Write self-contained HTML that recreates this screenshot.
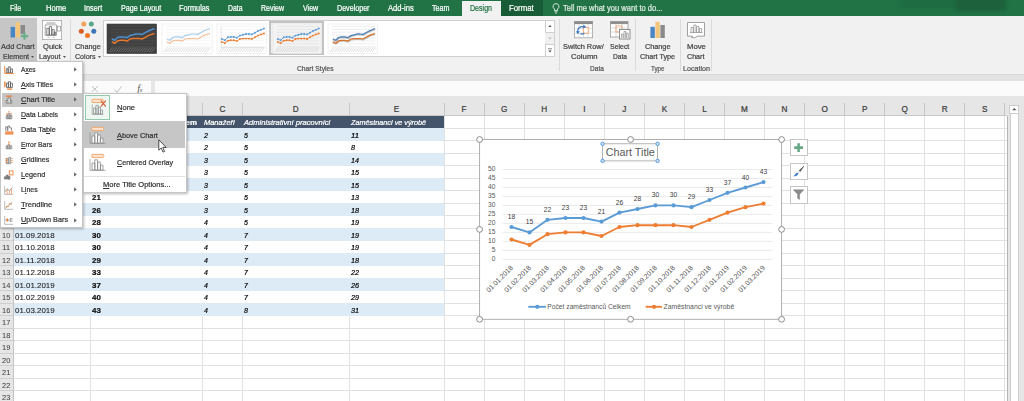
<!DOCTYPE html>
<html lang="cs"><head><meta charset="utf-8"><title>Excel - Chart Title</title>
<style>
html,body{margin:0;padding:0;}
body{width:1024px;height:401px;overflow:hidden;position:relative;background:#fff;font-family:"Liberation Sans",sans-serif;}
div{position:absolute;box-sizing:border-box;}
svg{position:absolute;overflow:visible;}
.t{white-space:nowrap;-webkit-text-stroke:0.22px currentColor;}
u{text-decoration-thickness:0.6px;text-underline-offset:1px;}
</style></head><body>

<div style="left:0.00px;top:0.00px;width:1024.00px;height:15.80px;background:#217346;"></div>
<div style="left:500.50px;top:0.00px;width:42.20px;height:15.80px;background:#185c37;"></div>
<div style="left:461.50px;top:1.30px;width:39.00px;height:14.60px;background:#f1f1f1;"></div>
<div style="left:900px;top:-2px;width:56px;height:10px;background:#1e6a41;filter:blur(2px);opacity:.8"></div>
<div style="left:955px;top:-3px;width:51px;height:14px;background:#1c5f3b;filter:blur(2px);opacity:.9"></div>
<div class="t" style="top:3px;font-size:8.3px;line-height:10px;color:#fff;left:10.00px;transform-origin:0 50%;transform:scaleX(0.8411);">File</div>
<div class="t" style="top:3px;font-size:8.3px;line-height:10px;color:#fff;left:45.50px;transform-origin:0 50%;transform:scaleX(0.9078);">Home</div>
<div class="t" style="top:3px;font-size:8.3px;line-height:10px;color:#fff;left:83.75px;transform-origin:0 50%;transform:scaleX(0.8792);">Insert</div>
<div class="t" style="top:3px;font-size:8.3px;line-height:10px;color:#fff;left:120.50px;transform-origin:0 50%;transform:scaleX(0.8624);">Page Layout</div>
<div class="t" style="top:3px;font-size:8.3px;line-height:10px;color:#fff;left:179.00px;transform-origin:0 50%;transform:scaleX(0.8817);">Formulas</div>
<div class="t" style="top:3px;font-size:8.3px;line-height:10px;color:#fff;left:228.00px;transform-origin:0 50%;transform:scaleX(0.8270);">Data</div>
<div class="t" style="top:3px;font-size:8.3px;line-height:10px;color:#fff;left:261.00px;transform-origin:0 50%;transform:scaleX(0.8451);">Review</div>
<div class="t" style="top:3px;font-size:8.3px;line-height:10px;color:#fff;left:302.50px;transform-origin:0 50%;transform:scaleX(0.8548);">View</div>
<div class="t" style="top:3px;font-size:8.3px;line-height:10px;color:#fff;left:336.50px;transform-origin:0 50%;transform:scaleX(0.8590);">Developer</div>
<div class="t" style="top:3px;font-size:8.3px;line-height:10px;color:#fff;left:387.75px;transform-origin:0 50%;transform:scaleX(0.9150);">Add-ins</div>
<div class="t" style="top:3px;font-size:8.3px;line-height:10px;color:#fff;left:432.25px;transform-origin:0 50%;transform:scaleX(0.8622);">Team</div>
<div class="t" style="top:3px;font-size:8.3px;line-height:10px;color:#217346;left:469.75px;transform-origin:0 50%;transform:scaleX(0.8515);">Design</div>
<div class="t" style="top:3px;font-size:8.3px;line-height:10px;color:#fff;left:509.00px;transform-origin:0 50%;transform:scaleX(0.9415);">Format</div>
<div class="t" style="top:3px;font-size:8.3px;line-height:10px;color:#dcebe2;left:563.25px;transform-origin:0 50%;transform:scaleX(0.9100);">Tell me what you want to do...</div>
<svg style="left:551px;top:3px" width="10" height="11" viewBox="0 0 10 11"><path d="M5 0.6a2.9 2.9 0 0 1 1.5 5.4v1.6h-3v-1.6a2.9 2.9 0 0 1 1.5-5.4z" fill="none" stroke="#fff" stroke-width="0.8"/><path d="M3.6 8.8h2.8M4 10h2" stroke="#fff" stroke-width="0.7"/></svg>
<div style="left:0.00px;top:15.80px;width:1024.00px;height:58.40px;background:#f1f1f1;"></div>
<div style="left:0.00px;top:74.20px;width:1024.00px;height:7.20px;background:#e3e3e3;"></div>
<div style="left:0.00px;top:73.80px;width:1024.00px;height:0.80px;background:#d8d8d8;"></div>
<div style="left:0.00px;top:81.30px;width:1024.00px;height:14.90px;background:#e6e6e6;"></div>
<div style="left:84.00px;top:81.30px;width:67.30px;height:14.80px;background:#fbfbfb;"></div>
<div style="left:154.80px;top:81.30px;width:870.00px;height:14.80px;background:#fbfbfb;"></div>
<svg style="left:91px;top:85px" width="60" height="9" viewBox="0 0 60 9"><path d="M1 1.4l5.6 5.4M6.6 1.4l-5.6 5.4" stroke="#b2b2b2" stroke-width="0.85" fill="none"/><path d="M23.6 4.800l2.400 2.600l4.600-6" stroke="#b2b2b2" stroke-width="0.85" fill="none"/></svg>
<div class="t" style="left:137.2px;top:82.6px;font-size:9.8px;line-height:11px;color:#555;-webkit-text-stroke:0;font-family:'Liberation Serif',serif;font-style:italic">f<span style="font-size:5.2px;font-style:italic;font-family:'Liberation Sans',sans-serif;margin-left:-0.3px">x</span></div>
<div style="left:0.00px;top:17.60px;width:36.80px;height:44.00px;background:#c6c6c6;"></div>
<svg style="left:9px;top:20px" width="22" height="22" viewBox="0 0 22 22">
<rect x="1.6" y="6.9" width="4.4" height="10.6" fill="#4a86c5"/><rect x="6.6" y="2.2" width="4.4" height="15.3" fill="#f4c67c"/><rect x="11.6" y="5" width="4.4" height="9" fill="#8a8a8a"/>
<path d="M11.9 15.1h2.5v-2.5h2.2v2.5h2.5v2.2h-2.5v2.5h-2.2v-2.5h-2.5z" fill="#6aae8c"/></svg>
<div class="t" style="top:42px;font-size:7.5px;line-height:9px;color:#444;left:1.30px;transform-origin:0 50%;transform:scaleX(0.9950);">Add Chart</div>
<div class="t" style="top:52px;font-size:7.5px;line-height:9px;color:#444;left:2.90px;transform-origin:0 50%;transform:scaleX(0.9486);">Element</div>
<svg style="left:31.30px;top:55.60px" width="3" height="2" viewBox="0 0 3 2"><path d="M0 0h3l-1.5 1.9z" fill="#555"/></svg>
<svg style="left:42.200px;top:20px" width="20" height="20" viewBox="0 0 20 20"><rect x="0.400" y="0.400" width="19.200" height="19.200" fill="#fff" stroke="#a8a8a8" stroke-width="0.8"/>
<path d="M4.300 3h9.200" stroke="#a4a4a4" stroke-width="1.100"/><rect x="3.200" y="4.900" width="11.400" height="10.400" fill="none" stroke="#8f8f8f" stroke-width="0.7"/>
<path d="M2 7.500h1.200M2 10h1.200M2 12.500h1.200" stroke="#bdbdbd" stroke-width="0.5"/>
<path d="M4.800 15v-6.700h2.200v6.700zM7.400 15v-8.400h2.200v8.400zM10 15v-5.400h2.200v5.400zM12.200 15v-3h1.500v3z" fill="#fff" stroke="#555" stroke-width="0.75"/>
<rect x="15.600" y="6.200" width="2.800" height="4.800" fill="#fff" stroke="#8a8a8a" stroke-width="0.65"/><path d="M5.500 17.400h2.500M10.500 17.400h2.500" stroke="#b0b0b0" stroke-width="0.7"/></svg>
<div class="t" style="top:42px;font-size:7.5px;line-height:9px;color:#444;left:42.75px;transform-origin:0 50%;transform:scaleX(1.0093);">Quick</div>
<div class="t" style="top:52px;font-size:7.5px;line-height:9px;color:#444;left:38.70px;transform-origin:0 50%;transform:scaleX(0.9548);">Layout</div>
<svg style="left:62.70px;top:55.60px" width="3" height="2" viewBox="0 0 3 2"><path d="M0 0h3l-1.5 1.9z" fill="#555"/></svg>
<div style="left:70.10px;top:19.00px;width:0.80px;height:52.00px;background:#dadada;"></div>
<svg style="left:76px;top:20px" width="24" height="20" viewBox="0 0 24 20"><circle cx="7.8" cy="4.1" r="2.5" fill="#f4a25a"/><circle cx="15.3" cy="4.1" r="2.5" fill="#5aa88a"/><circle cx="17.8" cy="11.2" r="2.5" fill="#3f76b8"/><circle cx="11.5" cy="15.4" r="2.5" fill="#ee7623"/><circle cx="5.3" cy="11.2" r="2.5" fill="#dc5f24"/></svg>
<div class="t" style="top:42px;font-size:7.5px;line-height:9px;color:#444;left:75.20px;transform-origin:0 50%;transform:scaleX(0.9820);">Change</div>
<div class="t" style="top:52px;font-size:7.5px;line-height:9px;color:#444;left:74.90px;transform-origin:0 50%;transform:scaleX(0.9459);">Colors</div>
<svg style="left:97.80px;top:55.60px" width="3" height="2" viewBox="0 0 3 2"><path d="M0 0h3l-1.5 1.9z" fill="#555"/></svg>
<div style="left:103.20px;top:19.80px;width:452.00px;height:37.60px;background:#fff;border:0.8px solid #cfcfcf;"></div>
<div style="left:544.60px;top:19.80px;width:10.60px;height:37.60px;background:#fff;border:0.8px solid #cfcfcf;"></div>
<div style="left:545.40px;top:32.40px;width:9.00px;height:12.40px;background:#f0f0f0;border-top:0.8px solid #cfcfcf;border-bottom:0.8px solid #cfcfcf;"></div>
<svg style="left:545px;top:20px" width="10" height="37" viewBox="0 0 10 37"><path d="M3.3 7l1.7-2l1.7 2z" fill="#555"/><path d="M3.3 17.6l1.7 2l1.7-2z" fill="#bbb"/><path d="M3 28.8h4" stroke="#555" stroke-width="0.7"/><path d="M3.3 30.4l1.7 2l1.7-2z" fill="#555"/></svg>
<svg style="left:106.6px;top:23.9px" width="49.6" height="29.6" viewBox="0 0 49.6 29.6"><rect x="0" y="0" width="49.6" height="29.6" fill="#404040" stroke="#404040" stroke-width="0.6"/><path d="M4 2.4H47.6" stroke="#5a5a5a" stroke-width="0.45"/><path d="M4 5.3H47.6" stroke="#5a5a5a" stroke-width="0.45"/><path d="M4 8.2H47.6" stroke="#5a5a5a" stroke-width="0.45"/><path d="M4 11.1H47.6" stroke="#5a5a5a" stroke-width="0.45"/><path d="M4 14.0H47.6" stroke="#5a5a5a" stroke-width="0.45"/><path d="M4 16.9H47.6" stroke="#5a5a5a" stroke-width="0.45"/><path d="M4 19.8H47.6" stroke="#5a5a5a" stroke-width="0.45"/><path d="M4 22.7H47.6" stroke="#5a5a5a" stroke-width="0.45"/><polyline points="4.8,15.0 7.8,16.3 10.9,13.3 13.9,12.9 17.0,12.9 20.0,13.7 23.1,11.6 26.1,10.8 29.1,10.0 32.2,10.0 35.2,10.4 38.3,8.7 41.3,7.0 44.4,5.8 47.4,4.5" fill="none" stroke="#4f8fd0" stroke-width="1.5" stroke-linejoin="round"/><polyline points="4.8,17.9 7.8,19.2 10.9,16.7 13.9,16.3 17.0,16.3 20.0,17.1 23.1,15.0 26.1,14.6 29.1,14.6 32.2,14.6 35.2,15.0 38.3,13.3 41.3,11.6 44.4,10.4 47.4,9.5" fill="none" stroke="#e8782c" stroke-width="1.5" stroke-linejoin="round"/><path d="M1.8 28.0L5.4 23.4" stroke="#8c8c8c" stroke-width="0.55"/><path d="M4.2 28.0L7.8 23.4" stroke="#8c8c8c" stroke-width="0.55"/><path d="M6.5 28.0L10.1 23.4" stroke="#8c8c8c" stroke-width="0.55"/><path d="M8.9 28.0L12.5 23.4" stroke="#8c8c8c" stroke-width="0.55"/><path d="M11.3 28.0L14.9 23.4" stroke="#8c8c8c" stroke-width="0.55"/><path d="M13.6 28.0L17.2 23.4" stroke="#8c8c8c" stroke-width="0.55"/><path d="M16.0 28.0L19.6 23.4" stroke="#8c8c8c" stroke-width="0.55"/><path d="M18.4 28.0L22.0 23.4" stroke="#8c8c8c" stroke-width="0.55"/><path d="M20.7 28.0L24.3 23.4" stroke="#8c8c8c" stroke-width="0.55"/><path d="M23.1 28.0L26.7 23.4" stroke="#8c8c8c" stroke-width="0.55"/><path d="M25.5 28.0L29.1 23.4" stroke="#8c8c8c" stroke-width="0.55"/><path d="M27.8 28.0L31.4 23.4" stroke="#8c8c8c" stroke-width="0.55"/><path d="M30.2 28.0L33.8 23.4" stroke="#8c8c8c" stroke-width="0.55"/><path d="M32.6 28.0L36.2 23.4" stroke="#8c8c8c" stroke-width="0.55"/><path d="M34.9 28.0L38.5 23.4" stroke="#8c8c8c" stroke-width="0.55"/><path d="M37.3 28.0L40.9 23.4" stroke="#8c8c8c" stroke-width="0.55"/><path d="M39.7 28.0L43.3 23.4" stroke="#8c8c8c" stroke-width="0.55"/><path d="M42.0 28.0L45.6 23.4" stroke="#8c8c8c" stroke-width="0.55"/><path d="M44.4 28.0L48.0 23.4" stroke="#8c8c8c" stroke-width="0.55"/></svg>
<svg style="left:161.6px;top:23.9px" width="50.1" height="29.6" viewBox="0 0 50.1 29.6"><rect x="0" y="0" width="50.1" height="29.6" fill="#fff" stroke="#e6e6e6" stroke-width="0.6"/><path d="M4 2.4H48.1" stroke="#e9e9e9" stroke-width="0.45"/><path d="M4 5.3H48.1" stroke="#e9e9e9" stroke-width="0.45"/><path d="M4 8.2H48.1" stroke="#e9e9e9" stroke-width="0.45"/><path d="M4 11.1H48.1" stroke="#e9e9e9" stroke-width="0.45"/><path d="M4 14.0H48.1" stroke="#e9e9e9" stroke-width="0.45"/><path d="M4 16.9H48.1" stroke="#e9e9e9" stroke-width="0.45"/><path d="M4 19.8H48.1" stroke="#e9e9e9" stroke-width="0.45"/><path d="M4 22.7H48.1" stroke="#e9e9e9" stroke-width="0.45"/><polyline points="4.8,15.0 7.9,16.3 11.0,13.3 14.0,12.9 17.1,12.9 20.2,13.7 23.3,11.6 26.4,10.8 29.4,10.0 32.5,10.0 35.6,10.4 38.7,8.7 41.7,7.0 44.8,5.8 47.9,4.5" fill="none" stroke="#a9cdec" stroke-width="1.2" stroke-linejoin="round"/><polyline points="4.8,17.9 7.9,19.2 11.0,16.7 14.0,16.3 17.1,16.3 20.2,17.1 23.3,15.0 26.4,14.6 29.4,14.6 32.5,14.6 35.6,15.0 38.7,13.3 41.7,11.6 44.8,10.4 47.9,9.5" fill="none" stroke="#f5c09c" stroke-width="1.2" stroke-linejoin="round"/><path d="M1.8 28.0L5.4 23.4" stroke="#c2c2c2" stroke-width="0.55"/><path d="M4.2 28.0L7.8 23.4" stroke="#c2c2c2" stroke-width="0.55"/><path d="M6.6 28.0L10.2 23.4" stroke="#c2c2c2" stroke-width="0.55"/><path d="M9.0 28.0L12.6 23.4" stroke="#c2c2c2" stroke-width="0.55"/><path d="M11.4 28.0L15.0 23.4" stroke="#c2c2c2" stroke-width="0.55"/><path d="M13.8 28.0L17.4 23.4" stroke="#c2c2c2" stroke-width="0.55"/><path d="M16.2 28.0L19.8 23.4" stroke="#c2c2c2" stroke-width="0.55"/><path d="M18.6 28.0L22.2 23.4" stroke="#c2c2c2" stroke-width="0.55"/><path d="M21.0 28.0L24.6 23.4" stroke="#c2c2c2" stroke-width="0.55"/><path d="M23.4 28.0L27.0 23.4" stroke="#c2c2c2" stroke-width="0.55"/><path d="M25.7 28.0L29.3 23.4" stroke="#c2c2c2" stroke-width="0.55"/><path d="M28.1 28.0L31.7 23.4" stroke="#c2c2c2" stroke-width="0.55"/><path d="M30.5 28.0L34.1 23.4" stroke="#c2c2c2" stroke-width="0.55"/><path d="M32.9 28.0L36.5 23.4" stroke="#c2c2c2" stroke-width="0.55"/><path d="M35.3 28.0L38.9 23.4" stroke="#c2c2c2" stroke-width="0.55"/><path d="M37.7 28.0L41.3 23.4" stroke="#c2c2c2" stroke-width="0.55"/><path d="M40.1 28.0L43.7 23.4" stroke="#c2c2c2" stroke-width="0.55"/><path d="M42.5 28.0L46.1 23.4" stroke="#c2c2c2" stroke-width="0.55"/><path d="M44.9 28.0L48.5 23.4" stroke="#c2c2c2" stroke-width="0.55"/></svg>
<svg style="left:216.5px;top:23.9px" width="49.2" height="29.6" viewBox="0 0 49.2 29.6"><rect x="0" y="0" width="49.2" height="29.6" fill="#fff" stroke="#e6e6e6" stroke-width="0.6"/><path d="M4 2.4H47.2" stroke="#e6e6e6" stroke-width="0.45"/><path d="M4 5.3H47.2" stroke="#e6e6e6" stroke-width="0.45"/><path d="M4 8.2H47.2" stroke="#e6e6e6" stroke-width="0.45"/><path d="M4 11.1H47.2" stroke="#e6e6e6" stroke-width="0.45"/><path d="M4 14.0H47.2" stroke="#e6e6e6" stroke-width="0.45"/><path d="M4 16.9H47.2" stroke="#e6e6e6" stroke-width="0.45"/><path d="M4 19.8H47.2" stroke="#e6e6e6" stroke-width="0.45"/><path d="M4 22.7H47.2" stroke="#e6e6e6" stroke-width="0.45"/><path d="M4 2v21.4H47.2" fill="none" stroke="#cfcfcf" stroke-width="0.5"/><polyline points="4.8,15.0 7.8,16.3 10.8,13.3 13.8,12.9 16.9,12.9 19.9,13.7 22.9,11.6 25.9,10.8 28.9,10.0 31.9,10.0 34.9,10.4 38.0,8.7 41.0,7.0 44.0,5.8 47.0,4.5" fill="none" stroke="#5b9bd5" stroke-width="0.9" stroke-linejoin="round"/><polyline points="4.8,17.9 7.8,19.2 10.8,16.7 13.8,16.3 16.9,16.3 19.9,17.1 22.9,15.0 25.9,14.6 28.9,14.6 31.9,14.6 34.9,15.0 38.0,13.3 41.0,11.6 44.0,10.4 47.0,9.5" fill="none" stroke="#ed7d31" stroke-width="0.9" stroke-linejoin="round"/><circle cx="4.8" cy="15.0" r="0.95" fill="#5b9bd5"/><circle cx="7.8" cy="16.3" r="0.95" fill="#5b9bd5"/><circle cx="10.8" cy="13.3" r="0.95" fill="#5b9bd5"/><circle cx="13.8" cy="12.9" r="0.95" fill="#5b9bd5"/><circle cx="16.9" cy="12.9" r="0.95" fill="#5b9bd5"/><circle cx="19.9" cy="13.7" r="0.95" fill="#5b9bd5"/><circle cx="22.9" cy="11.6" r="0.95" fill="#5b9bd5"/><circle cx="25.9" cy="10.8" r="0.95" fill="#5b9bd5"/><circle cx="28.9" cy="10.0" r="0.95" fill="#5b9bd5"/><circle cx="31.9" cy="10.0" r="0.95" fill="#5b9bd5"/><circle cx="34.9" cy="10.4" r="0.95" fill="#5b9bd5"/><circle cx="38.0" cy="8.7" r="0.95" fill="#5b9bd5"/><circle cx="41.0" cy="7.0" r="0.95" fill="#5b9bd5"/><circle cx="44.0" cy="5.8" r="0.95" fill="#5b9bd5"/><circle cx="47.0" cy="4.5" r="0.95" fill="#5b9bd5"/><circle cx="4.8" cy="17.9" r="0.95" fill="#ed7d31"/><circle cx="7.8" cy="19.2" r="0.95" fill="#ed7d31"/><circle cx="10.8" cy="16.7" r="0.95" fill="#ed7d31"/><circle cx="13.8" cy="16.3" r="0.95" fill="#ed7d31"/><circle cx="16.9" cy="16.3" r="0.95" fill="#ed7d31"/><circle cx="19.9" cy="17.1" r="0.95" fill="#ed7d31"/><circle cx="22.9" cy="15.0" r="0.95" fill="#ed7d31"/><circle cx="25.9" cy="14.6" r="0.95" fill="#ed7d31"/><circle cx="28.9" cy="14.6" r="0.95" fill="#ed7d31"/><circle cx="31.9" cy="14.6" r="0.95" fill="#ed7d31"/><circle cx="34.9" cy="15.0" r="0.95" fill="#ed7d31"/><circle cx="38.0" cy="13.3" r="0.95" fill="#ed7d31"/><circle cx="41.0" cy="11.6" r="0.95" fill="#ed7d31"/><circle cx="44.0" cy="10.4" r="0.95" fill="#ed7d31"/><circle cx="47.0" cy="9.5" r="0.95" fill="#ed7d31"/><path d="M1.8 28.0L5.4 23.4" stroke="#c2c2c2" stroke-width="0.55"/><path d="M4.1 28.0L7.7 23.4" stroke="#c2c2c2" stroke-width="0.55"/><path d="M6.5 28.0L10.1 23.4" stroke="#c2c2c2" stroke-width="0.55"/><path d="M8.8 28.0L12.4 23.4" stroke="#c2c2c2" stroke-width="0.55"/><path d="M11.2 28.0L14.8 23.4" stroke="#c2c2c2" stroke-width="0.55"/><path d="M13.5 28.0L17.1 23.4" stroke="#c2c2c2" stroke-width="0.55"/><path d="M15.9 28.0L19.5 23.4" stroke="#c2c2c2" stroke-width="0.55"/><path d="M18.2 28.0L21.8 23.4" stroke="#c2c2c2" stroke-width="0.55"/><path d="M20.6 28.0L24.2 23.4" stroke="#c2c2c2" stroke-width="0.55"/><path d="M22.9 28.0L26.5 23.4" stroke="#c2c2c2" stroke-width="0.55"/><path d="M25.2 28.0L28.8 23.4" stroke="#c2c2c2" stroke-width="0.55"/><path d="M27.6 28.0L31.2 23.4" stroke="#c2c2c2" stroke-width="0.55"/><path d="M29.9 28.0L33.5 23.4" stroke="#c2c2c2" stroke-width="0.55"/><path d="M32.3 28.0L35.9 23.4" stroke="#c2c2c2" stroke-width="0.55"/><path d="M34.6 28.0L38.2 23.4" stroke="#c2c2c2" stroke-width="0.55"/><path d="M37.0 28.0L40.6 23.4" stroke="#c2c2c2" stroke-width="0.55"/><path d="M39.3 28.0L42.9 23.4" stroke="#c2c2c2" stroke-width="0.55"/><path d="M41.7 28.0L45.3 23.4" stroke="#c2c2c2" stroke-width="0.55"/><path d="M44.0 28.0L47.6 23.4" stroke="#c2c2c2" stroke-width="0.55"/></svg>
<div style="left:269.20px;top:21.30px;width:55.00px;height:34.20px;background:#efefef;border:2.5px solid #c3c3c3;"></div>
<svg style="left:272.7px;top:23.9px" width="48.0" height="29.6" viewBox="0 0 48.0 29.6"><rect x="0" y="0" width="48.0" height="29.6" fill="#f4f4f4" stroke="#e6e6e6" stroke-width="0.6"/><path d="M4 2.4H46.0" stroke="#d2d2d2" stroke-width="0.45"/><path d="M4 5.3H46.0" stroke="#d2d2d2" stroke-width="0.45"/><path d="M4 8.2H46.0" stroke="#d2d2d2" stroke-width="0.45"/><path d="M4 11.1H46.0" stroke="#d2d2d2" stroke-width="0.45"/><path d="M4 14.0H46.0" stroke="#d2d2d2" stroke-width="0.45"/><path d="M4 16.9H46.0" stroke="#d2d2d2" stroke-width="0.45"/><path d="M4 19.8H46.0" stroke="#d2d2d2" stroke-width="0.45"/><path d="M4 22.7H46.0" stroke="#d2d2d2" stroke-width="0.45"/><polyline points="4.8,15.0 7.7,16.3 10.7,13.3 13.6,12.9 16.5,12.9 19.4,13.7 22.4,11.6 25.3,10.8 28.2,10.0 31.2,10.0 34.1,10.4 37.0,8.7 39.9,7.0 42.9,5.8 45.8,4.5" fill="none" stroke="#5b9bd5" stroke-width="0.9" stroke-linejoin="round"/><polyline points="4.8,17.9 7.7,19.2 10.7,16.7 13.6,16.3 16.5,16.3 19.4,17.1 22.4,15.0 25.3,14.6 28.2,14.6 31.2,14.6 34.1,15.0 37.0,13.3 39.9,11.6 42.9,10.4 45.8,9.5" fill="none" stroke="#ed7d31" stroke-width="0.9" stroke-linejoin="round"/><circle cx="4.8" cy="15.0" r="0.95" fill="#5b9bd5"/><circle cx="7.7" cy="16.3" r="0.95" fill="#5b9bd5"/><circle cx="10.7" cy="13.3" r="0.95" fill="#5b9bd5"/><circle cx="13.6" cy="12.9" r="0.95" fill="#5b9bd5"/><circle cx="16.5" cy="12.9" r="0.95" fill="#5b9bd5"/><circle cx="19.4" cy="13.7" r="0.95" fill="#5b9bd5"/><circle cx="22.4" cy="11.6" r="0.95" fill="#5b9bd5"/><circle cx="25.3" cy="10.8" r="0.95" fill="#5b9bd5"/><circle cx="28.2" cy="10.0" r="0.95" fill="#5b9bd5"/><circle cx="31.2" cy="10.0" r="0.95" fill="#5b9bd5"/><circle cx="34.1" cy="10.4" r="0.95" fill="#5b9bd5"/><circle cx="37.0" cy="8.7" r="0.95" fill="#5b9bd5"/><circle cx="39.9" cy="7.0" r="0.95" fill="#5b9bd5"/><circle cx="42.9" cy="5.8" r="0.95" fill="#5b9bd5"/><circle cx="45.8" cy="4.5" r="0.95" fill="#5b9bd5"/><circle cx="4.8" cy="17.9" r="0.95" fill="#ed7d31"/><circle cx="7.7" cy="19.2" r="0.95" fill="#ed7d31"/><circle cx="10.7" cy="16.7" r="0.95" fill="#ed7d31"/><circle cx="13.6" cy="16.3" r="0.95" fill="#ed7d31"/><circle cx="16.5" cy="16.3" r="0.95" fill="#ed7d31"/><circle cx="19.4" cy="17.1" r="0.95" fill="#ed7d31"/><circle cx="22.4" cy="15.0" r="0.95" fill="#ed7d31"/><circle cx="25.3" cy="14.6" r="0.95" fill="#ed7d31"/><circle cx="28.2" cy="14.6" r="0.95" fill="#ed7d31"/><circle cx="31.2" cy="14.6" r="0.95" fill="#ed7d31"/><circle cx="34.1" cy="15.0" r="0.95" fill="#ed7d31"/><circle cx="37.0" cy="13.3" r="0.95" fill="#ed7d31"/><circle cx="39.9" cy="11.6" r="0.95" fill="#ed7d31"/><circle cx="42.9" cy="10.4" r="0.95" fill="#ed7d31"/><circle cx="45.8" cy="9.5" r="0.95" fill="#ed7d31"/><path d="M1.8 28.0L5.4 23.4" stroke="#c2c2c2" stroke-width="0.55"/><path d="M4.1 28.0L7.7 23.4" stroke="#c2c2c2" stroke-width="0.55"/><path d="M6.4 28.0L10.0 23.4" stroke="#c2c2c2" stroke-width="0.55"/><path d="M8.6 28.0L12.2 23.4" stroke="#c2c2c2" stroke-width="0.55"/><path d="M10.9 28.0L14.5 23.4" stroke="#c2c2c2" stroke-width="0.55"/><path d="M13.2 28.0L16.8 23.4" stroke="#c2c2c2" stroke-width="0.55"/><path d="M15.5 28.0L19.1 23.4" stroke="#c2c2c2" stroke-width="0.55"/><path d="M17.7 28.0L21.3 23.4" stroke="#c2c2c2" stroke-width="0.55"/><path d="M20.0 28.0L23.6 23.4" stroke="#c2c2c2" stroke-width="0.55"/><path d="M22.3 28.0L25.9 23.4" stroke="#c2c2c2" stroke-width="0.55"/><path d="M24.6 28.0L28.2 23.4" stroke="#c2c2c2" stroke-width="0.55"/><path d="M26.9 28.0L30.5 23.4" stroke="#c2c2c2" stroke-width="0.55"/><path d="M29.1 28.0L32.7 23.4" stroke="#c2c2c2" stroke-width="0.55"/><path d="M31.4 28.0L35.0 23.4" stroke="#c2c2c2" stroke-width="0.55"/><path d="M33.7 28.0L37.3 23.4" stroke="#c2c2c2" stroke-width="0.55"/><path d="M36.0 28.0L39.6 23.4" stroke="#c2c2c2" stroke-width="0.55"/><path d="M38.2 28.0L41.8 23.4" stroke="#c2c2c2" stroke-width="0.55"/><path d="M40.5 28.0L44.1 23.4" stroke="#c2c2c2" stroke-width="0.55"/><path d="M42.8 28.0L46.4 23.4" stroke="#c2c2c2" stroke-width="0.55"/></svg>
<svg style="left:327.6px;top:23.9px" width="49.2" height="29.6" viewBox="0 0 49.2 29.6"><rect x="0" y="0" width="49.2" height="29.6" fill="#fff" stroke="#e6e6e6" stroke-width="0.6"/><path d="M4 2.4H47.2" stroke="#d6d6d6" stroke-width="0.45"/><path d="M4 5.3H47.2" stroke="#d6d6d6" stroke-width="0.45"/><path d="M4 8.2H47.2" stroke="#d6d6d6" stroke-width="0.45"/><path d="M4 11.1H47.2" stroke="#d6d6d6" stroke-width="0.45"/><path d="M4 14.0H47.2" stroke="#d6d6d6" stroke-width="0.45"/><path d="M4 16.9H47.2" stroke="#d6d6d6" stroke-width="0.45"/><path d="M4 19.8H47.2" stroke="#d6d6d6" stroke-width="0.45"/><path d="M4 22.7H47.2" stroke="#d6d6d6" stroke-width="0.45"/><polyline points="4.8,15.0 7.8,16.3 10.8,13.3 13.8,12.9 16.9,12.9 19.9,13.7 22.9,11.6 25.9,10.8 28.9,10.0 31.9,10.0 34.9,10.4 38.0,8.7 41.0,7.0 44.0,5.8 47.0,4.5" fill="none" stroke="#8a8a8a" stroke-width="1.6" opacity=".5" transform="translate(0.3,0.7)"/><polyline points="4.8,17.9 7.8,19.2 10.8,16.7 13.8,16.3 16.9,16.3 19.9,17.1 22.9,15.0 25.9,14.6 28.9,14.6 31.9,14.6 34.9,15.0 38.0,13.3 41.0,11.6 44.0,10.4 47.0,9.5" fill="none" stroke="#8a8a8a" stroke-width="1.6" opacity=".5" transform="translate(0.3,0.7)"/><polyline points="4.8,15.0 7.8,16.3 10.8,13.3 13.8,12.9 16.9,12.9 19.9,13.7 22.9,11.6 25.9,10.8 28.9,10.0 31.9,10.0 34.9,10.4 38.0,8.7 41.0,7.0 44.0,5.8 47.0,4.5" fill="none" stroke="#4a7fb8" stroke-width="1.25" stroke-linejoin="round"/><polyline points="4.8,17.9 7.8,19.2 10.8,16.7 13.8,16.3 16.9,16.3 19.9,17.1 22.9,15.0 25.9,14.6 28.9,14.6 31.9,14.6 34.9,15.0 38.0,13.3 41.0,11.6 44.0,10.4 47.0,9.5" fill="none" stroke="#d9742e" stroke-width="1.25" stroke-linejoin="round"/><path d="M1.8 28.0L5.4 23.4" stroke="#c2c2c2" stroke-width="0.55"/><path d="M4.1 28.0L7.7 23.4" stroke="#c2c2c2" stroke-width="0.55"/><path d="M6.5 28.0L10.1 23.4" stroke="#c2c2c2" stroke-width="0.55"/><path d="M8.8 28.0L12.4 23.4" stroke="#c2c2c2" stroke-width="0.55"/><path d="M11.2 28.0L14.8 23.4" stroke="#c2c2c2" stroke-width="0.55"/><path d="M13.5 28.0L17.1 23.4" stroke="#c2c2c2" stroke-width="0.55"/><path d="M15.9 28.0L19.5 23.4" stroke="#c2c2c2" stroke-width="0.55"/><path d="M18.2 28.0L21.8 23.4" stroke="#c2c2c2" stroke-width="0.55"/><path d="M20.6 28.0L24.2 23.4" stroke="#c2c2c2" stroke-width="0.55"/><path d="M22.9 28.0L26.5 23.4" stroke="#c2c2c2" stroke-width="0.55"/><path d="M25.2 28.0L28.8 23.4" stroke="#c2c2c2" stroke-width="0.55"/><path d="M27.6 28.0L31.2 23.4" stroke="#c2c2c2" stroke-width="0.55"/><path d="M29.9 28.0L33.5 23.4" stroke="#c2c2c2" stroke-width="0.55"/><path d="M32.3 28.0L35.9 23.4" stroke="#c2c2c2" stroke-width="0.55"/><path d="M34.6 28.0L38.2 23.4" stroke="#c2c2c2" stroke-width="0.55"/><path d="M37.0 28.0L40.6 23.4" stroke="#c2c2c2" stroke-width="0.55"/><path d="M39.3 28.0L42.9 23.4" stroke="#c2c2c2" stroke-width="0.55"/><path d="M41.7 28.0L45.3 23.4" stroke="#c2c2c2" stroke-width="0.55"/><path d="M44.0 28.0L47.6 23.4" stroke="#c2c2c2" stroke-width="0.55"/></svg>
<div class="t" style="top:64px;font-size:7.3px;line-height:9px;color:#555;left:296.50px;transform-origin:0 50%;transform:scaleX(0.9231);">Chart Styles</div>
<div style="left:559.20px;top:19.00px;width:0.80px;height:52.00px;background:#dadada;"></div>
<svg style="left:574.2px;top:20.800px" width="19" height="17.500" viewBox="0 0 19 17.500"><rect x="0.400" y="0.400" width="18.200" height="16.400" fill="#fff" stroke="#a0a0a0" stroke-width="0.8"/><rect x="0.400" y="0.400" width="18.200" height="2.700" fill="#8a8a8a"/>
<path d="M0.500 7.600h18M0.500 12.200h18M5 3v14M9.500 3v14M14 3v14" stroke="#cdcdcd" stroke-width="0.6"/>
<rect x="9.300" y="6.400" width="5" height="5.800" fill="#fff" stroke="#f0a26a" stroke-width="0.9"/>
<path d="M3.600 11.200c-0.600-3.600 2.400-6.400 6.600-5.400" fill="none" stroke="#3a78c0" stroke-width="1.300"/><path d="M1.800 10.400l2.200 2.800l1.600-3.200z" fill="#3a78c0"/><path d="M9.600 3.800l2.600 2.200l-3 1.400z" fill="#3a78c0"/>
<path d="M6.400 12.600c1.400 0.800 3 0.400 4-0.600" fill="none" stroke="#3a78c0" stroke-width="1.100"/></svg>
<div class="t" style="top:42px;font-size:7.5px;line-height:9px;color:#444;left:563.40px;transform-origin:0 50%;transform:scaleX(0.9864);">Switch Row/</div>
<div class="t" style="top:52px;font-size:7.5px;line-height:9px;color:#444;left:571.10px;transform-origin:0 50%;transform:scaleX(1.0292);">Column</div>
<svg style="left:610px;top:21px" width="21" height="19" viewBox="0 0 21 19"><rect x="0.5" y="0.5" width="17.5" height="15.5" fill="#fff" stroke="#9a9a9a" stroke-width="0.8"/><rect x="0.5" y="0.5" width="17.5" height="2.6" fill="#8e8e8e"/>
<path d="M0.5 7h17.5M0.5 11h17.5M6 3v13M12 3v13" stroke="#c4c4c4" stroke-width="0.6"/><rect x="6" y="5" width="6" height="6" fill="none" stroke="#f0a878" stroke-width="0.9"/>
<rect x="9.5" y="8.5" width="10.5" height="9.5" fill="#fff" stroke="#777" stroke-width="0.8"/><path d="M11.5 17v-4h1.6v4M14 17v-6.5h1.6V17M16.6 17v-5h1.6v5" fill="none" stroke="#777" stroke-width="0.6"/></svg>
<div class="t" style="top:42px;font-size:7.5px;line-height:9px;color:#444;left:609.80px;transform-origin:0 50%;transform:scaleX(0.9259);">Select</div>
<div class="t" style="top:52px;font-size:7.5px;line-height:9px;color:#444;left:612.70px;transform-origin:0 50%;transform:scaleX(0.8837);">Data</div>
<div class="t" style="top:64px;font-size:7.3px;line-height:9px;color:#555;left:590.10px;transform-origin:0 50%;transform:scaleX(0.9079);">Data</div>
<div style="left:635.20px;top:19.00px;width:0.80px;height:52.00px;background:#dadada;"></div>
<svg style="left:649px;top:20px" width="18" height="19" viewBox="0 0 18 19"><rect x="1.4" y="6.8" width="4.4" height="11.2" fill="#4a86c5"/><rect x="6.4" y="1.8" width="4.4" height="16.2" fill="#f4c67c"/><rect x="11.4" y="5" width="4.4" height="13" fill="#8a8a8a"/></svg>
<div class="t" style="top:42px;font-size:7.5px;line-height:9px;color:#444;left:644.75px;transform-origin:0 50%;transform:scaleX(0.9687);">Change</div>
<div class="t" style="top:52px;font-size:7.5px;line-height:9px;color:#444;left:639.90px;transform-origin:0 50%;transform:scaleX(0.9604);">Chart Type</div>
<div class="t" style="top:64px;font-size:7.3px;line-height:9px;color:#555;left:651.20px;transform-origin:0 50%;transform:scaleX(0.8467);">Type</div>
<div style="left:680.30px;top:19.00px;width:0.80px;height:52.00px;background:#dadada;"></div>
<svg style="left:687px;top:21.600px" width="19" height="17" viewBox="0 0 19 17"><path d="M0.500 0.500h17v13.600h-7.500c-1 1.600-3.600 2-5.500 1.200l1-1.200h-5z" fill="#fff" stroke="#8a8a8a" stroke-width="0.8"/>
<path d="M4 10.500v-5h2.200v5M6.800 10.500v-7.500h2.200v7.500M9.600 10.500v-6h2.200v6M12.400 10.500v-4h2.200v4M3 10.500h12.500" fill="none" stroke="#777" stroke-width="0.6"/></svg>
<div class="t" style="top:42px;font-size:7.5px;line-height:9px;color:#444;left:686.80px;transform-origin:0 50%;transform:scaleX(1.0305);">Move</div>
<div class="t" style="top:52px;font-size:7.5px;line-height:9px;color:#444;left:687.10px;transform-origin:0 50%;transform:scaleX(0.9487);">Chart</div>
<div class="t" style="top:64px;font-size:7.3px;line-height:9px;color:#555;left:682.60px;transform-origin:0 50%;transform:scaleX(0.9819);">Location</div>
<div style="left:710.80px;top:19.00px;width:0.80px;height:52.00px;background:#dadada;"></div>
<div style="left:0.00px;top:96.20px;width:1024.00px;height:304.80px;background:#e6e6e6;"></div>
<div style="left:13.60px;top:115.50px;width:993.80px;height:285.50px;background:#fff;"></div>
<div class="t" style="top:105px;font-size:8.2px;line-height:9px;color:#3c3c3c;left:49.22px;">A</div>
<div style="left:89.90px;top:103.00px;width:0.80px;height:12.50px;background:#c6c6c6;"></div>
<div class="t" style="top:105px;font-size:8.2px;line-height:9px;color:#3c3c3c;left:143.52px;">B</div>
<div style="left:201.80px;top:103.00px;width:0.80px;height:12.50px;background:#c6c6c6;"></div>
<div class="t" style="top:105px;font-size:8.2px;line-height:9px;color:#3c3c3c;left:219.44px;">C</div>
<div style="left:242.20px;top:103.00px;width:0.80px;height:12.50px;background:#c6c6c6;"></div>
<div class="t" style="top:105px;font-size:8.2px;line-height:9px;color:#3c3c3c;left:292.79px;">D</div>
<div style="left:348.50px;top:103.00px;width:0.80px;height:12.50px;background:#c6c6c6;"></div>
<div class="t" style="top:105px;font-size:8.2px;line-height:9px;color:#3c3c3c;left:393.77px;">E</div>
<div style="left:443.70px;top:103.00px;width:0.80px;height:12.50px;background:#c6c6c6;"></div>
<div class="t" style="top:105px;font-size:8.2px;line-height:9px;color:#3c3c3c;left:461.62px;">F</div>
<div style="left:483.75px;top:103.00px;width:0.80px;height:12.50px;background:#c6c6c6;"></div>
<div class="t" style="top:105px;font-size:8.2px;line-height:9px;color:#3c3c3c;left:500.99px;">G</div>
<div style="left:523.80px;top:103.00px;width:0.80px;height:12.50px;background:#c6c6c6;"></div>
<div class="t" style="top:105px;font-size:8.2px;line-height:9px;color:#3c3c3c;left:541.26px;">H</div>
<div style="left:563.85px;top:103.00px;width:0.80px;height:12.50px;background:#c6c6c6;"></div>
<div class="t" style="top:105px;font-size:8.2px;line-height:9px;color:#3c3c3c;left:583.14px;">I</div>
<div style="left:603.90px;top:103.00px;width:0.80px;height:12.50px;background:#c6c6c6;"></div>
<div class="t" style="top:105px;font-size:8.2px;line-height:9px;color:#3c3c3c;left:622.27px;">J</div>
<div style="left:643.95px;top:103.00px;width:0.80px;height:12.50px;background:#c6c6c6;"></div>
<div class="t" style="top:105px;font-size:8.2px;line-height:9px;color:#3c3c3c;left:661.64px;">K</div>
<div style="left:684.00px;top:103.00px;width:0.80px;height:12.50px;background:#c6c6c6;"></div>
<div class="t" style="top:105px;font-size:8.2px;line-height:9px;color:#3c3c3c;left:702.14px;">L</div>
<div style="left:724.05px;top:103.00px;width:0.80px;height:12.50px;background:#c6c6c6;"></div>
<div class="t" style="top:105px;font-size:8.2px;line-height:9px;color:#3c3c3c;left:741.06px;">M</div>
<div style="left:764.10px;top:103.00px;width:0.80px;height:12.50px;background:#c6c6c6;"></div>
<div class="t" style="top:105px;font-size:8.2px;line-height:9px;color:#3c3c3c;left:781.56px;">N</div>
<div style="left:804.15px;top:103.00px;width:0.80px;height:12.50px;background:#c6c6c6;"></div>
<div class="t" style="top:105px;font-size:8.2px;line-height:9px;color:#3c3c3c;left:821.39px;">O</div>
<div style="left:844.20px;top:103.00px;width:0.80px;height:12.50px;background:#c6c6c6;"></div>
<div class="t" style="top:105px;font-size:8.2px;line-height:9px;color:#3c3c3c;left:861.89px;">P</div>
<div style="left:884.25px;top:103.00px;width:0.80px;height:12.50px;background:#c6c6c6;"></div>
<div class="t" style="top:105px;font-size:8.2px;line-height:9px;color:#3c3c3c;left:901.49px;">Q</div>
<div style="left:924.30px;top:103.00px;width:0.80px;height:12.50px;background:#c6c6c6;"></div>
<div class="t" style="top:105px;font-size:8.2px;line-height:9px;color:#3c3c3c;left:941.76px;">R</div>
<div style="left:964.35px;top:103.00px;width:0.80px;height:12.50px;background:#c6c6c6;"></div>
<div class="t" style="top:105px;font-size:8.2px;line-height:9px;color:#3c3c3c;left:982.04px;">S</div>
<div style="left:1004.40px;top:103.00px;width:0.80px;height:12.50px;background:#c6c6c6;"></div>
<div style="left:0.00px;top:115.00px;width:1007.40px;height:0.90px;background:#c8c8c8;"></div>
<div style="left:89.90px;top:115.90px;width:0.80px;height:285.50px;background:#e1e1e1;"></div>
<div style="left:201.80px;top:115.90px;width:0.80px;height:285.50px;background:#e1e1e1;"></div>
<div style="left:242.20px;top:115.90px;width:0.80px;height:285.50px;background:#e1e1e1;"></div>
<div style="left:348.50px;top:115.90px;width:0.80px;height:285.50px;background:#e1e1e1;"></div>
<div style="left:443.70px;top:115.90px;width:0.80px;height:285.50px;background:#e1e1e1;"></div>
<div style="left:483.75px;top:115.90px;width:0.80px;height:285.50px;background:#e1e1e1;"></div>
<div style="left:523.80px;top:115.90px;width:0.80px;height:285.50px;background:#e1e1e1;"></div>
<div style="left:563.85px;top:115.90px;width:0.80px;height:285.50px;background:#e1e1e1;"></div>
<div style="left:603.90px;top:115.90px;width:0.80px;height:285.50px;background:#e1e1e1;"></div>
<div style="left:643.95px;top:115.90px;width:0.80px;height:285.50px;background:#e1e1e1;"></div>
<div style="left:684.00px;top:115.90px;width:0.80px;height:285.50px;background:#e1e1e1;"></div>
<div style="left:724.05px;top:115.90px;width:0.80px;height:285.50px;background:#e1e1e1;"></div>
<div style="left:764.10px;top:115.90px;width:0.80px;height:285.50px;background:#e1e1e1;"></div>
<div style="left:804.15px;top:115.90px;width:0.80px;height:285.50px;background:#e1e1e1;"></div>
<div style="left:844.20px;top:115.90px;width:0.80px;height:285.50px;background:#e1e1e1;"></div>
<div style="left:884.25px;top:115.90px;width:0.80px;height:285.50px;background:#e1e1e1;"></div>
<div style="left:924.30px;top:115.90px;width:0.80px;height:285.50px;background:#e1e1e1;"></div>
<div style="left:964.35px;top:115.90px;width:0.80px;height:285.50px;background:#e1e1e1;"></div>
<div style="left:1004.40px;top:115.90px;width:0.80px;height:285.50px;background:#e1e1e1;"></div>
<div style="left:13.60px;top:127.60px;width:993.40px;height:0.80px;background:#e1e1e1;"></div>
<div style="left:0.00px;top:127.60px;width:13.60px;height:0.80px;background:#cfcfcf;"></div>
<div style="left:13.60px;top:140.10px;width:993.40px;height:0.80px;background:#e1e1e1;"></div>
<div style="left:0.00px;top:140.10px;width:13.60px;height:0.80px;background:#cfcfcf;"></div>
<div style="left:13.60px;top:152.60px;width:993.40px;height:0.80px;background:#e1e1e1;"></div>
<div style="left:0.00px;top:152.60px;width:13.60px;height:0.80px;background:#cfcfcf;"></div>
<div style="left:13.60px;top:165.10px;width:993.40px;height:0.80px;background:#e1e1e1;"></div>
<div style="left:0.00px;top:165.10px;width:13.60px;height:0.80px;background:#cfcfcf;"></div>
<div style="left:13.60px;top:177.60px;width:993.40px;height:0.80px;background:#e1e1e1;"></div>
<div style="left:0.00px;top:177.60px;width:13.60px;height:0.80px;background:#cfcfcf;"></div>
<div style="left:13.60px;top:190.10px;width:993.40px;height:0.80px;background:#e1e1e1;"></div>
<div style="left:0.00px;top:190.10px;width:13.60px;height:0.80px;background:#cfcfcf;"></div>
<div style="left:13.60px;top:202.60px;width:993.40px;height:0.80px;background:#e1e1e1;"></div>
<div style="left:0.00px;top:202.60px;width:13.60px;height:0.80px;background:#cfcfcf;"></div>
<div style="left:13.60px;top:215.10px;width:993.40px;height:0.80px;background:#e1e1e1;"></div>
<div style="left:0.00px;top:215.10px;width:13.60px;height:0.80px;background:#cfcfcf;"></div>
<div style="left:13.60px;top:227.60px;width:993.40px;height:0.80px;background:#e1e1e1;"></div>
<div style="left:0.00px;top:227.60px;width:13.60px;height:0.80px;background:#cfcfcf;"></div>
<div style="left:13.60px;top:240.10px;width:993.40px;height:0.80px;background:#e1e1e1;"></div>
<div style="left:0.00px;top:240.10px;width:13.60px;height:0.80px;background:#cfcfcf;"></div>
<div style="left:13.60px;top:252.60px;width:993.40px;height:0.80px;background:#e1e1e1;"></div>
<div style="left:0.00px;top:252.60px;width:13.60px;height:0.80px;background:#cfcfcf;"></div>
<div style="left:13.60px;top:265.10px;width:993.40px;height:0.80px;background:#e1e1e1;"></div>
<div style="left:0.00px;top:265.10px;width:13.60px;height:0.80px;background:#cfcfcf;"></div>
<div style="left:13.60px;top:277.60px;width:993.40px;height:0.80px;background:#e1e1e1;"></div>
<div style="left:0.00px;top:277.60px;width:13.60px;height:0.80px;background:#cfcfcf;"></div>
<div style="left:13.60px;top:290.10px;width:993.40px;height:0.80px;background:#e1e1e1;"></div>
<div style="left:0.00px;top:290.10px;width:13.60px;height:0.80px;background:#cfcfcf;"></div>
<div style="left:13.60px;top:302.60px;width:993.40px;height:0.80px;background:#e1e1e1;"></div>
<div style="left:0.00px;top:302.60px;width:13.60px;height:0.80px;background:#cfcfcf;"></div>
<div style="left:13.60px;top:315.10px;width:993.40px;height:0.80px;background:#e1e1e1;"></div>
<div style="left:0.00px;top:315.10px;width:13.60px;height:0.80px;background:#cfcfcf;"></div>
<div style="left:13.60px;top:327.60px;width:993.40px;height:0.80px;background:#e1e1e1;"></div>
<div style="left:0.00px;top:327.60px;width:13.60px;height:0.80px;background:#cfcfcf;"></div>
<div style="left:13.60px;top:340.10px;width:993.40px;height:0.80px;background:#e1e1e1;"></div>
<div style="left:0.00px;top:340.10px;width:13.60px;height:0.80px;background:#cfcfcf;"></div>
<div style="left:13.60px;top:352.60px;width:993.40px;height:0.80px;background:#e1e1e1;"></div>
<div style="left:0.00px;top:352.60px;width:13.60px;height:0.80px;background:#cfcfcf;"></div>
<div style="left:13.60px;top:365.10px;width:993.40px;height:0.80px;background:#e1e1e1;"></div>
<div style="left:0.00px;top:365.10px;width:13.60px;height:0.80px;background:#cfcfcf;"></div>
<div style="left:13.60px;top:377.60px;width:993.40px;height:0.80px;background:#e1e1e1;"></div>
<div style="left:0.00px;top:377.60px;width:13.60px;height:0.80px;background:#cfcfcf;"></div>
<div style="left:13.60px;top:390.10px;width:993.40px;height:0.80px;background:#e1e1e1;"></div>
<div style="left:0.00px;top:390.10px;width:13.60px;height:0.80px;background:#cfcfcf;"></div>
<div style="left:13.60px;top:402.60px;width:993.40px;height:0.80px;background:#e1e1e1;"></div>
<div style="left:0.00px;top:402.60px;width:13.60px;height:0.80px;background:#cfcfcf;"></div>
<div style="left:13.60px;top:415.10px;width:993.40px;height:0.80px;background:#e1e1e1;"></div>
<div style="left:0.00px;top:415.10px;width:13.60px;height:0.80px;background:#cfcfcf;"></div>
<div style="left:13.20px;top:115.50px;width:0.80px;height:285.50px;background:#c4c4c4;"></div>
<div style="left:14.00px;top:115.50px;width:429.70px;height:200.00px;background:#fff;"></div>
<div style="left:13.60px;top:115.50px;width:430.50px;height:12.80px;background:#44546a;"></div>
<div class="t" style="top:118px;font-size:7.8px;line-height:9px;color:#fff;font-weight:bold;left:15.30px;">Datum</div>
<div class="t" style="top:118px;font-size:7.8px;line-height:9px;color:#fff;font-weight:bold;left:92.50px;transform-origin:0 50%;transform:scaleX(1.0122);">Počet zaměstnanců Celkem</div>
<div class="t" style="top:118px;font-size:7.3px;line-height:9px;color:#fff;font-style:italic;left:204.40px;transform-origin:0 50%;transform:scaleX(1.0225);">Manažeři</div>
<div class="t" style="top:118px;font-size:7.3px;line-height:9px;color:#fff;font-style:italic;left:243.90px;transform-origin:0 50%;transform:scaleX(1.0376);">Administrativní pracovníci</div>
<div class="t" style="top:118px;font-size:7.3px;line-height:9px;color:#fff;font-style:italic;left:350.60px;transform-origin:0 50%;transform:scaleX(0.9964);">Zaměstnanci ve výrobě</div>
<div style="left:13.60px;top:128.00px;width:430.50px;height:12.50px;background:#ddebf7;"></div>
<div class="t" style="top:131px;font-size:7.9px;line-height:9px;color:#1a1a1a;left:15.30px;transform-origin:0 50%;transform:scaleX(1.0041);-webkit-text-stroke:0.08px currentColor;">01.01.2018</div>
<div class="t" style="top:131px;font-size:7.8px;line-height:9px;color:#111;font-weight:bold;left:91.60px;transform-origin:0 50%;transform:scaleX(1.0143);">18</div>
<div class="t" style="top:131px;font-size:7.8px;line-height:9px;color:#000;font-style:italic;left:204.40px;transform-origin:0 50%;transform:scaleX(0.8990);">2</div>
<div class="t" style="top:131px;font-size:7.8px;line-height:9px;color:#000;font-style:italic;left:244.20px;transform-origin:0 50%;transform:scaleX(0.8990);">5</div>
<div class="t" style="top:131px;font-size:7.8px;line-height:9px;color:#000;font-style:italic;left:350.60px;transform-origin:0 50%;transform:scaleX(0.9880);">11</div>
<div class="t" style="top:143px;font-size:7.9px;line-height:9px;color:#1a1a1a;left:15.30px;transform-origin:0 50%;transform:scaleX(1.0041);-webkit-text-stroke:0.08px currentColor;">01.02.2018</div>
<div class="t" style="top:143px;font-size:7.8px;line-height:9px;color:#111;font-weight:bold;left:91.60px;transform-origin:0 50%;transform:scaleX(1.0143);">15</div>
<div class="t" style="top:143px;font-size:7.8px;line-height:9px;color:#000;font-style:italic;left:204.40px;transform-origin:0 50%;transform:scaleX(0.8990);">2</div>
<div class="t" style="top:143px;font-size:7.8px;line-height:9px;color:#000;font-style:italic;left:244.20px;transform-origin:0 50%;transform:scaleX(0.8990);">5</div>
<div class="t" style="top:143px;font-size:7.8px;line-height:9px;color:#000;font-style:italic;left:350.60px;transform-origin:0 50%;transform:scaleX(0.9221);">8</div>
<div style="left:13.60px;top:153.00px;width:430.50px;height:12.50px;background:#ddebf7;"></div>
<div class="t" style="top:156px;font-size:7.9px;line-height:9px;color:#1a1a1a;left:15.30px;transform-origin:0 50%;transform:scaleX(1.0041);-webkit-text-stroke:0.08px currentColor;">01.03.2018</div>
<div class="t" style="top:156px;font-size:7.8px;line-height:9px;color:#111;font-weight:bold;left:91.60px;transform-origin:0 50%;transform:scaleX(1.0143);">22</div>
<div class="t" style="top:156px;font-size:7.8px;line-height:9px;color:#000;font-style:italic;left:204.40px;transform-origin:0 50%;transform:scaleX(0.8990);">3</div>
<div class="t" style="top:156px;font-size:7.8px;line-height:9px;color:#000;font-style:italic;left:244.20px;transform-origin:0 50%;transform:scaleX(0.8990);">5</div>
<div class="t" style="top:156px;font-size:7.8px;line-height:9px;color:#000;font-style:italic;left:350.60px;transform-origin:0 50%;transform:scaleX(0.9221);">14</div>
<div class="t" style="top:168px;font-size:7.9px;line-height:9px;color:#1a1a1a;left:15.30px;transform-origin:0 50%;transform:scaleX(1.0041);-webkit-text-stroke:0.08px currentColor;">01.04.2018</div>
<div class="t" style="top:168px;font-size:7.8px;line-height:9px;color:#111;font-weight:bold;left:91.60px;transform-origin:0 50%;transform:scaleX(1.0143);">23</div>
<div class="t" style="top:168px;font-size:7.8px;line-height:9px;color:#000;font-style:italic;left:204.40px;transform-origin:0 50%;transform:scaleX(0.8990);">3</div>
<div class="t" style="top:168px;font-size:7.8px;line-height:9px;color:#000;font-style:italic;left:244.20px;transform-origin:0 50%;transform:scaleX(0.8990);">5</div>
<div class="t" style="top:168px;font-size:7.8px;line-height:9px;color:#000;font-style:italic;left:350.60px;transform-origin:0 50%;transform:scaleX(0.9221);">15</div>
<div style="left:13.60px;top:178.00px;width:430.50px;height:12.50px;background:#ddebf7;"></div>
<div class="t" style="top:181px;font-size:7.9px;line-height:9px;color:#1a1a1a;left:15.30px;transform-origin:0 50%;transform:scaleX(1.0041);-webkit-text-stroke:0.08px currentColor;">01.05.2018</div>
<div class="t" style="top:181px;font-size:7.8px;line-height:9px;color:#111;font-weight:bold;left:91.60px;transform-origin:0 50%;transform:scaleX(1.0143);">23</div>
<div class="t" style="top:181px;font-size:7.8px;line-height:9px;color:#000;font-style:italic;left:204.40px;transform-origin:0 50%;transform:scaleX(0.8990);">3</div>
<div class="t" style="top:181px;font-size:7.8px;line-height:9px;color:#000;font-style:italic;left:244.20px;transform-origin:0 50%;transform:scaleX(0.8990);">5</div>
<div class="t" style="top:181px;font-size:7.8px;line-height:9px;color:#000;font-style:italic;left:350.60px;transform-origin:0 50%;transform:scaleX(0.9221);">15</div>
<div class="t" style="top:193px;font-size:7.9px;line-height:9px;color:#1a1a1a;left:15.30px;transform-origin:0 50%;transform:scaleX(1.0041);-webkit-text-stroke:0.08px currentColor;">01.06.2018</div>
<div class="t" style="top:193px;font-size:7.8px;line-height:9px;color:#111;font-weight:bold;left:91.60px;transform-origin:0 50%;transform:scaleX(1.0143);">21</div>
<div class="t" style="top:193px;font-size:7.8px;line-height:9px;color:#000;font-style:italic;left:204.40px;transform-origin:0 50%;transform:scaleX(0.8990);">3</div>
<div class="t" style="top:193px;font-size:7.8px;line-height:9px;color:#000;font-style:italic;left:244.20px;transform-origin:0 50%;transform:scaleX(0.8990);">5</div>
<div class="t" style="top:193px;font-size:7.8px;line-height:9px;color:#000;font-style:italic;left:350.60px;transform-origin:0 50%;transform:scaleX(0.9221);">13</div>
<div style="left:13.60px;top:203.00px;width:430.50px;height:12.50px;background:#ddebf7;"></div>
<div class="t" style="top:206px;font-size:7.9px;line-height:9px;color:#1a1a1a;left:15.30px;transform-origin:0 50%;transform:scaleX(1.0041);-webkit-text-stroke:0.08px currentColor;">01.07.2018</div>
<div class="t" style="top:206px;font-size:7.8px;line-height:9px;color:#111;font-weight:bold;left:91.60px;transform-origin:0 50%;transform:scaleX(1.0143);">26</div>
<div class="t" style="top:206px;font-size:7.8px;line-height:9px;color:#000;font-style:italic;left:204.40px;transform-origin:0 50%;transform:scaleX(0.8990);">3</div>
<div class="t" style="top:206px;font-size:7.8px;line-height:9px;color:#000;font-style:italic;left:244.20px;transform-origin:0 50%;transform:scaleX(0.8990);">5</div>
<div class="t" style="top:206px;font-size:7.8px;line-height:9px;color:#000;font-style:italic;left:350.60px;transform-origin:0 50%;transform:scaleX(0.9221);">18</div>
<div class="t" style="top:218px;font-size:7.9px;line-height:9px;color:#1a1a1a;left:15.30px;transform-origin:0 50%;transform:scaleX(1.0041);-webkit-text-stroke:0.08px currentColor;">01.08.2018</div>
<div class="t" style="top:218px;font-size:7.8px;line-height:9px;color:#111;font-weight:bold;left:91.60px;transform-origin:0 50%;transform:scaleX(1.0143);">28</div>
<div class="t" style="top:218px;font-size:7.8px;line-height:9px;color:#000;font-style:italic;left:204.40px;transform-origin:0 50%;transform:scaleX(0.8990);">4</div>
<div class="t" style="top:218px;font-size:7.8px;line-height:9px;color:#000;font-style:italic;left:244.20px;transform-origin:0 50%;transform:scaleX(0.8990);">5</div>
<div class="t" style="top:218px;font-size:7.8px;line-height:9px;color:#000;font-style:italic;left:350.60px;transform-origin:0 50%;transform:scaleX(0.9221);">19</div>
<div style="left:13.60px;top:228.00px;width:430.50px;height:12.50px;background:#ddebf7;"></div>
<div class="t" style="top:231px;font-size:7.9px;line-height:9px;color:#1a1a1a;left:15.30px;transform-origin:0 50%;transform:scaleX(1.0041);-webkit-text-stroke:0.08px currentColor;">01.09.2018</div>
<div class="t" style="top:231px;font-size:7.8px;line-height:9px;color:#111;font-weight:bold;left:91.60px;transform-origin:0 50%;transform:scaleX(1.0143);">30</div>
<div class="t" style="top:231px;font-size:7.8px;line-height:9px;color:#000;font-style:italic;left:204.40px;transform-origin:0 50%;transform:scaleX(0.8990);">4</div>
<div class="t" style="top:231px;font-size:7.8px;line-height:9px;color:#000;font-style:italic;left:244.20px;transform-origin:0 50%;transform:scaleX(0.8990);">7</div>
<div class="t" style="top:231px;font-size:7.8px;line-height:9px;color:#000;font-style:italic;left:350.60px;transform-origin:0 50%;transform:scaleX(0.9221);">19</div>
<div class="t" style="top:243px;font-size:7.9px;line-height:9px;color:#1a1a1a;left:15.30px;transform-origin:0 50%;transform:scaleX(1.0041);-webkit-text-stroke:0.08px currentColor;">01.10.2018</div>
<div class="t" style="top:243px;font-size:7.8px;line-height:9px;color:#111;font-weight:bold;left:91.60px;transform-origin:0 50%;transform:scaleX(1.0143);">30</div>
<div class="t" style="top:243px;font-size:7.8px;line-height:9px;color:#000;font-style:italic;left:204.40px;transform-origin:0 50%;transform:scaleX(0.8990);">4</div>
<div class="t" style="top:243px;font-size:7.8px;line-height:9px;color:#000;font-style:italic;left:244.20px;transform-origin:0 50%;transform:scaleX(0.8990);">7</div>
<div class="t" style="top:243px;font-size:7.8px;line-height:9px;color:#000;font-style:italic;left:350.60px;transform-origin:0 50%;transform:scaleX(0.9221);">19</div>
<div style="left:13.60px;top:253.00px;width:430.50px;height:12.50px;background:#ddebf7;"></div>
<div class="t" style="top:256px;font-size:7.9px;line-height:9px;color:#1a1a1a;left:15.30px;transform-origin:0 50%;transform:scaleX(1.0192);-webkit-text-stroke:0.08px currentColor;">01.11.2018</div>
<div class="t" style="top:256px;font-size:7.8px;line-height:9px;color:#111;font-weight:bold;left:91.60px;transform-origin:0 50%;transform:scaleX(1.0143);">29</div>
<div class="t" style="top:256px;font-size:7.8px;line-height:9px;color:#000;font-style:italic;left:204.40px;transform-origin:0 50%;transform:scaleX(0.8990);">4</div>
<div class="t" style="top:256px;font-size:7.8px;line-height:9px;color:#000;font-style:italic;left:244.20px;transform-origin:0 50%;transform:scaleX(0.8990);">7</div>
<div class="t" style="top:256px;font-size:7.8px;line-height:9px;color:#000;font-style:italic;left:350.60px;transform-origin:0 50%;transform:scaleX(0.9221);">18</div>
<div class="t" style="top:268px;font-size:7.9px;line-height:9px;color:#1a1a1a;left:15.30px;transform-origin:0 50%;transform:scaleX(1.0041);-webkit-text-stroke:0.08px currentColor;">01.12.2018</div>
<div class="t" style="top:268px;font-size:7.8px;line-height:9px;color:#111;font-weight:bold;left:91.60px;transform-origin:0 50%;transform:scaleX(1.0143);">33</div>
<div class="t" style="top:268px;font-size:7.8px;line-height:9px;color:#000;font-style:italic;left:204.40px;transform-origin:0 50%;transform:scaleX(0.8990);">4</div>
<div class="t" style="top:268px;font-size:7.8px;line-height:9px;color:#000;font-style:italic;left:244.20px;transform-origin:0 50%;transform:scaleX(0.8990);">7</div>
<div class="t" style="top:268px;font-size:7.8px;line-height:9px;color:#000;font-style:italic;left:350.60px;transform-origin:0 50%;transform:scaleX(0.9221);">22</div>
<div style="left:13.60px;top:278.00px;width:430.50px;height:12.50px;background:#ddebf7;"></div>
<div class="t" style="top:281px;font-size:7.9px;line-height:9px;color:#1a1a1a;left:15.30px;transform-origin:0 50%;transform:scaleX(1.0041);-webkit-text-stroke:0.08px currentColor;">01.01.2019</div>
<div class="t" style="top:281px;font-size:7.8px;line-height:9px;color:#111;font-weight:bold;left:91.60px;transform-origin:0 50%;transform:scaleX(1.0143);">37</div>
<div class="t" style="top:281px;font-size:7.8px;line-height:9px;color:#000;font-style:italic;left:204.40px;transform-origin:0 50%;transform:scaleX(0.8990);">4</div>
<div class="t" style="top:281px;font-size:7.8px;line-height:9px;color:#000;font-style:italic;left:244.20px;transform-origin:0 50%;transform:scaleX(0.8990);">7</div>
<div class="t" style="top:281px;font-size:7.8px;line-height:9px;color:#000;font-style:italic;left:350.60px;transform-origin:0 50%;transform:scaleX(0.9221);">26</div>
<div class="t" style="top:293px;font-size:7.9px;line-height:9px;color:#1a1a1a;left:15.30px;transform-origin:0 50%;transform:scaleX(1.0041);-webkit-text-stroke:0.08px currentColor;">01.02.2019</div>
<div class="t" style="top:293px;font-size:7.8px;line-height:9px;color:#111;font-weight:bold;left:91.60px;transform-origin:0 50%;transform:scaleX(1.0143);">40</div>
<div class="t" style="top:293px;font-size:7.8px;line-height:9px;color:#000;font-style:italic;left:204.40px;transform-origin:0 50%;transform:scaleX(0.8990);">4</div>
<div class="t" style="top:293px;font-size:7.8px;line-height:9px;color:#000;font-style:italic;left:244.20px;transform-origin:0 50%;transform:scaleX(0.8990);">7</div>
<div class="t" style="top:293px;font-size:7.8px;line-height:9px;color:#000;font-style:italic;left:350.60px;transform-origin:0 50%;transform:scaleX(0.9221);">29</div>
<div style="left:13.60px;top:303.00px;width:430.50px;height:12.50px;background:#ddebf7;"></div>
<div class="t" style="top:306px;font-size:7.9px;line-height:9px;color:#1a1a1a;left:15.30px;transform-origin:0 50%;transform:scaleX(1.0041);-webkit-text-stroke:0.08px currentColor;">01.03.2019</div>
<div class="t" style="top:306px;font-size:7.8px;line-height:9px;color:#111;font-weight:bold;left:91.60px;transform-origin:0 50%;transform:scaleX(1.0143);">43</div>
<div class="t" style="top:306px;font-size:7.8px;line-height:9px;color:#000;font-style:italic;left:204.40px;transform-origin:0 50%;transform:scaleX(0.8990);">4</div>
<div class="t" style="top:306px;font-size:7.8px;line-height:9px;color:#000;font-style:italic;left:244.20px;transform-origin:0 50%;transform:scaleX(0.8990);">8</div>
<div class="t" style="top:306px;font-size:7.8px;line-height:9px;color:#000;font-style:italic;left:350.60px;transform-origin:0 50%;transform:scaleX(0.9221);">31</div>
<div class="t" style="top:118px;font-size:7.7px;line-height:9px;color:#444;left:5.95px;transform-origin:0 50%;transform:scaleX(0.9691);-webkit-text-stroke:0.05px currentColor;">1</div>
<div class="t" style="top:131px;font-size:7.7px;line-height:9px;color:#444;left:5.95px;transform-origin:0 50%;transform:scaleX(0.9691);-webkit-text-stroke:0.05px currentColor;">2</div>
<div class="t" style="top:143px;font-size:7.7px;line-height:9px;color:#444;left:5.95px;transform-origin:0 50%;transform:scaleX(0.9691);-webkit-text-stroke:0.05px currentColor;">3</div>
<div class="t" style="top:156px;font-size:7.7px;line-height:9px;color:#444;left:5.95px;transform-origin:0 50%;transform:scaleX(0.9691);-webkit-text-stroke:0.05px currentColor;">4</div>
<div class="t" style="top:168px;font-size:7.7px;line-height:9px;color:#444;left:5.95px;transform-origin:0 50%;transform:scaleX(0.9691);-webkit-text-stroke:0.05px currentColor;">5</div>
<div class="t" style="top:181px;font-size:7.7px;line-height:9px;color:#444;left:5.95px;transform-origin:0 50%;transform:scaleX(0.9691);-webkit-text-stroke:0.05px currentColor;">6</div>
<div class="t" style="top:193px;font-size:7.7px;line-height:9px;color:#444;left:5.95px;transform-origin:0 50%;transform:scaleX(0.9691);-webkit-text-stroke:0.05px currentColor;">7</div>
<div class="t" style="top:206px;font-size:7.7px;line-height:9px;color:#444;left:5.95px;transform-origin:0 50%;transform:scaleX(0.9691);-webkit-text-stroke:0.05px currentColor;">8</div>
<div class="t" style="top:218px;font-size:7.7px;line-height:9px;color:#444;left:5.95px;transform-origin:0 50%;transform:scaleX(0.9691);-webkit-text-stroke:0.05px currentColor;">9</div>
<div class="t" style="top:231px;font-size:7.7px;line-height:9px;color:#444;left:1.80px;transform-origin:0 50%;transform:scaleX(0.9691);-webkit-text-stroke:0.05px currentColor;">10</div>
<div class="t" style="top:243px;font-size:7.7px;line-height:9px;color:#444;left:1.80px;transform-origin:0 50%;transform:scaleX(1.0383);-webkit-text-stroke:0.05px currentColor;">11</div>
<div class="t" style="top:256px;font-size:7.7px;line-height:9px;color:#444;left:1.80px;transform-origin:0 50%;transform:scaleX(0.9691);-webkit-text-stroke:0.05px currentColor;">12</div>
<div class="t" style="top:268px;font-size:7.7px;line-height:9px;color:#444;left:1.80px;transform-origin:0 50%;transform:scaleX(0.9691);-webkit-text-stroke:0.05px currentColor;">13</div>
<div class="t" style="top:281px;font-size:7.7px;line-height:9px;color:#444;left:1.80px;transform-origin:0 50%;transform:scaleX(0.9691);-webkit-text-stroke:0.05px currentColor;">14</div>
<div class="t" style="top:293px;font-size:7.7px;line-height:9px;color:#444;left:1.80px;transform-origin:0 50%;transform:scaleX(0.9691);-webkit-text-stroke:0.05px currentColor;">15</div>
<div class="t" style="top:306px;font-size:7.7px;line-height:9px;color:#444;left:1.80px;transform-origin:0 50%;transform:scaleX(0.9691);-webkit-text-stroke:0.05px currentColor;">16</div>
<div class="t" style="top:318px;font-size:7.7px;line-height:9px;color:#444;left:1.80px;transform-origin:0 50%;transform:scaleX(0.9691);-webkit-text-stroke:0.05px currentColor;">17</div>
<div class="t" style="top:331px;font-size:7.7px;line-height:9px;color:#444;left:1.80px;transform-origin:0 50%;transform:scaleX(0.9691);-webkit-text-stroke:0.05px currentColor;">18</div>
<div class="t" style="top:343px;font-size:7.7px;line-height:9px;color:#444;left:1.80px;transform-origin:0 50%;transform:scaleX(0.9691);-webkit-text-stroke:0.05px currentColor;">19</div>
<div class="t" style="top:356px;font-size:7.7px;line-height:9px;color:#444;left:1.80px;transform-origin:0 50%;transform:scaleX(0.9691);-webkit-text-stroke:0.05px currentColor;">20</div>
<div class="t" style="top:368px;font-size:7.7px;line-height:9px;color:#444;left:1.80px;transform-origin:0 50%;transform:scaleX(0.9691);-webkit-text-stroke:0.05px currentColor;">21</div>
<div class="t" style="top:381px;font-size:7.7px;line-height:9px;color:#444;left:1.80px;transform-origin:0 50%;transform:scaleX(0.9691);-webkit-text-stroke:0.05px currentColor;">22</div>
<div class="t" style="top:393px;font-size:7.7px;line-height:9px;color:#444;left:1.80px;transform-origin:0 50%;transform:scaleX(0.9691);-webkit-text-stroke:0.05px currentColor;">23</div>
<div style="left:1008.00px;top:96.20px;width:16.00px;height:304.80px;background:#e6e6e6;"></div>
<div style="left:1009.60px;top:113.00px;width:9.00px;height:290.00px;background:#fff;border:0.8px solid #cdcdcd;"></div>
<div style="left:1009.40px;top:104.50px;width:9.50px;height:9.00px;background:#fff;border:0.8px solid #cdcdcd;"></div>
<svg style="left:1011.8px;top:107.8px" width="4.6" height="2.4" viewBox="0 0 4.6 2.4"><path d="M0 2.300l2.300-2.300l2.300 2.300z" fill="#5a5a5a"/></svg>
<div style="left:1006.80px;top:115.50px;width:1.20px;height:285.50px;background:#b4b4b4;"></div>
<svg style="left:0;top:0" width="1024" height="401" viewBox="0 0 1024 401"><rect x="479.6" y="139.5" width="302.0" height="179.8" fill="#fff" stroke="#a6a6a6" stroke-width="0.9"/><path d="M502.5 259.30H772.5" stroke="#dcdcdc" stroke-width="0.6"/><text x="495.5" y="261.20" font-size="7.3" fill="#595959" text-anchor="end" font-family='"Liberation Sans", sans-serif' textLength="3.7" lengthAdjust="spacingAndGlyphs">0</text><path d="M502.5 250.32H772.5" stroke="#dcdcdc" stroke-width="0.6"/><text x="495.5" y="252.22" font-size="7.3" fill="#595959" text-anchor="end" font-family='"Liberation Sans", sans-serif' textLength="3.7" lengthAdjust="spacingAndGlyphs">5</text><path d="M502.5 241.34H772.5" stroke="#dcdcdc" stroke-width="0.6"/><text x="495.5" y="243.24" font-size="7.3" fill="#595959" text-anchor="end" font-family='"Liberation Sans", sans-serif' textLength="7.4" lengthAdjust="spacingAndGlyphs">10</text><path d="M502.5 232.36H772.5" stroke="#dcdcdc" stroke-width="0.6"/><text x="495.5" y="234.26" font-size="7.3" fill="#595959" text-anchor="end" font-family='"Liberation Sans", sans-serif' textLength="7.4" lengthAdjust="spacingAndGlyphs">15</text><path d="M502.5 223.38H772.5" stroke="#dcdcdc" stroke-width="0.6"/><text x="495.5" y="225.28" font-size="7.3" fill="#595959" text-anchor="end" font-family='"Liberation Sans", sans-serif' textLength="7.4" lengthAdjust="spacingAndGlyphs">20</text><path d="M502.5 214.40H772.5" stroke="#dcdcdc" stroke-width="0.6"/><text x="495.5" y="216.30" font-size="7.3" fill="#595959" text-anchor="end" font-family='"Liberation Sans", sans-serif' textLength="7.4" lengthAdjust="spacingAndGlyphs">25</text><path d="M502.5 205.42H772.5" stroke="#dcdcdc" stroke-width="0.6"/><text x="495.5" y="207.32" font-size="7.3" fill="#595959" text-anchor="end" font-family='"Liberation Sans", sans-serif' textLength="7.4" lengthAdjust="spacingAndGlyphs">30</text><path d="M502.5 196.44H772.5" stroke="#dcdcdc" stroke-width="0.6"/><text x="495.5" y="198.34" font-size="7.3" fill="#595959" text-anchor="end" font-family='"Liberation Sans", sans-serif' textLength="7.4" lengthAdjust="spacingAndGlyphs">35</text><path d="M502.5 187.46H772.5" stroke="#dcdcdc" stroke-width="0.6"/><text x="495.5" y="189.36" font-size="7.3" fill="#595959" text-anchor="end" font-family='"Liberation Sans", sans-serif' textLength="7.4" lengthAdjust="spacingAndGlyphs">40</text><path d="M502.5 178.48H772.5" stroke="#dcdcdc" stroke-width="0.6"/><text x="495.5" y="180.38" font-size="7.3" fill="#595959" text-anchor="end" font-family='"Liberation Sans", sans-serif' textLength="7.4" lengthAdjust="spacingAndGlyphs">45</text><path d="M502.5 169.50H772.5" stroke="#dcdcdc" stroke-width="0.6"/><text x="495.5" y="171.40" font-size="7.3" fill="#595959" text-anchor="end" font-family='"Liberation Sans", sans-serif' textLength="7.4" lengthAdjust="spacingAndGlyphs">50</text><polyline points="511.5,239.5 529.5,244.9 547.5,234.2 565.5,232.4 583.5,232.4 601.5,236.0 619.5,227.0 637.5,225.2 655.5,225.2 673.5,225.2 691.5,227.0 709.5,219.8 727.5,212.6 745.5,207.2 763.5,203.6" fill="none" stroke="#ed7d31" stroke-width="1.85" stroke-linejoin="round"/><circle cx="511.5" cy="239.5" r="2.1" fill="#ed7d31"/><circle cx="529.5" cy="244.9" r="2.1" fill="#ed7d31"/><circle cx="547.5" cy="234.2" r="2.1" fill="#ed7d31"/><circle cx="565.5" cy="232.4" r="2.1" fill="#ed7d31"/><circle cx="583.5" cy="232.4" r="2.1" fill="#ed7d31"/><circle cx="601.5" cy="236.0" r="2.1" fill="#ed7d31"/><circle cx="619.5" cy="227.0" r="2.1" fill="#ed7d31"/><circle cx="637.5" cy="225.2" r="2.1" fill="#ed7d31"/><circle cx="655.5" cy="225.2" r="2.1" fill="#ed7d31"/><circle cx="673.5" cy="225.2" r="2.1" fill="#ed7d31"/><circle cx="691.5" cy="227.0" r="2.1" fill="#ed7d31"/><circle cx="709.5" cy="219.8" r="2.1" fill="#ed7d31"/><circle cx="727.5" cy="212.6" r="2.1" fill="#ed7d31"/><circle cx="745.5" cy="207.2" r="2.1" fill="#ed7d31"/><circle cx="763.5" cy="203.6" r="2.1" fill="#ed7d31"/><polyline points="511.5,227.0 529.5,232.4 547.5,219.8 565.5,218.0 583.5,218.0 601.5,221.6 619.5,212.6 637.5,209.0 655.5,205.4 673.5,205.4 691.5,207.2 709.5,200.0 727.5,192.8 745.5,187.5 763.5,182.1" fill="none" stroke="#5b9bd5" stroke-width="1.85" stroke-linejoin="round"/><circle cx="511.5" cy="227.0" r="2.1" fill="#5b9bd5"/><circle cx="529.5" cy="232.4" r="2.1" fill="#5b9bd5"/><circle cx="547.5" cy="219.8" r="2.1" fill="#5b9bd5"/><circle cx="565.5" cy="218.0" r="2.1" fill="#5b9bd5"/><circle cx="583.5" cy="218.0" r="2.1" fill="#5b9bd5"/><circle cx="601.5" cy="221.6" r="2.1" fill="#5b9bd5"/><circle cx="619.5" cy="212.6" r="2.1" fill="#5b9bd5"/><circle cx="637.5" cy="209.0" r="2.1" fill="#5b9bd5"/><circle cx="655.5" cy="205.4" r="2.1" fill="#5b9bd5"/><circle cx="673.5" cy="205.4" r="2.1" fill="#5b9bd5"/><circle cx="691.5" cy="207.2" r="2.1" fill="#5b9bd5"/><circle cx="709.5" cy="200.0" r="2.1" fill="#5b9bd5"/><circle cx="727.5" cy="192.8" r="2.1" fill="#5b9bd5"/><circle cx="745.5" cy="187.5" r="2.1" fill="#5b9bd5"/><circle cx="763.5" cy="182.1" r="2.1" fill="#5b9bd5"/><text x="511.5" y="219.0" font-size="7.3" fill="#404040" text-anchor="middle" font-family='"Liberation Sans", sans-serif' textLength="7.4" lengthAdjust="spacingAndGlyphs">18</text><text x="529.5" y="224.4" font-size="7.3" fill="#404040" text-anchor="middle" font-family='"Liberation Sans", sans-serif' textLength="7.4" lengthAdjust="spacingAndGlyphs">15</text><text x="547.5" y="211.8" font-size="7.3" fill="#404040" text-anchor="middle" font-family='"Liberation Sans", sans-serif' textLength="7.4" lengthAdjust="spacingAndGlyphs">22</text><text x="565.5" y="210.0" font-size="7.3" fill="#404040" text-anchor="middle" font-family='"Liberation Sans", sans-serif' textLength="7.4" lengthAdjust="spacingAndGlyphs">23</text><text x="583.5" y="210.0" font-size="7.3" fill="#404040" text-anchor="middle" font-family='"Liberation Sans", sans-serif' textLength="7.4" lengthAdjust="spacingAndGlyphs">23</text><text x="601.5" y="213.6" font-size="7.3" fill="#404040" text-anchor="middle" font-family='"Liberation Sans", sans-serif' textLength="7.4" lengthAdjust="spacingAndGlyphs">21</text><text x="619.5" y="204.6" font-size="7.3" fill="#404040" text-anchor="middle" font-family='"Liberation Sans", sans-serif' textLength="7.4" lengthAdjust="spacingAndGlyphs">26</text><text x="637.5" y="201.0" font-size="7.3" fill="#404040" text-anchor="middle" font-family='"Liberation Sans", sans-serif' textLength="7.4" lengthAdjust="spacingAndGlyphs">28</text><text x="655.5" y="197.4" font-size="7.3" fill="#404040" text-anchor="middle" font-family='"Liberation Sans", sans-serif' textLength="7.4" lengthAdjust="spacingAndGlyphs">30</text><text x="673.5" y="197.4" font-size="7.3" fill="#404040" text-anchor="middle" font-family='"Liberation Sans", sans-serif' textLength="7.4" lengthAdjust="spacingAndGlyphs">30</text><text x="691.5" y="199.2" font-size="7.3" fill="#404040" text-anchor="middle" font-family='"Liberation Sans", sans-serif' textLength="7.4" lengthAdjust="spacingAndGlyphs">29</text><text x="709.5" y="192.0" font-size="7.3" fill="#404040" text-anchor="middle" font-family='"Liberation Sans", sans-serif' textLength="7.4" lengthAdjust="spacingAndGlyphs">33</text><text x="727.5" y="184.8" font-size="7.3" fill="#404040" text-anchor="middle" font-family='"Liberation Sans", sans-serif' textLength="7.4" lengthAdjust="spacingAndGlyphs">37</text><text x="745.5" y="179.5" font-size="7.3" fill="#404040" text-anchor="middle" font-family='"Liberation Sans", sans-serif' textLength="7.4" lengthAdjust="spacingAndGlyphs">40</text><text x="763.5" y="174.1" font-size="7.3" fill="#404040" text-anchor="middle" font-family='"Liberation Sans", sans-serif' textLength="7.4" lengthAdjust="spacingAndGlyphs">43</text><text transform="translate(513.5,268.3) rotate(-45)" font-size="7.0" fill="#505050" text-anchor="end" font-family='"Liberation Sans", sans-serif' textLength="34.6" lengthAdjust="spacingAndGlyphs">01.01.2018</text><text transform="translate(531.5,268.3) rotate(-45)" font-size="7.0" fill="#505050" text-anchor="end" font-family='"Liberation Sans", sans-serif' textLength="34.6" lengthAdjust="spacingAndGlyphs">01.02.2018</text><text transform="translate(549.5,268.3) rotate(-45)" font-size="7.0" fill="#505050" text-anchor="end" font-family='"Liberation Sans", sans-serif' textLength="34.6" lengthAdjust="spacingAndGlyphs">01.03.2018</text><text transform="translate(567.5,268.3) rotate(-45)" font-size="7.0" fill="#505050" text-anchor="end" font-family='"Liberation Sans", sans-serif' textLength="34.6" lengthAdjust="spacingAndGlyphs">01.04.2018</text><text transform="translate(585.5,268.3) rotate(-45)" font-size="7.0" fill="#505050" text-anchor="end" font-family='"Liberation Sans", sans-serif' textLength="34.6" lengthAdjust="spacingAndGlyphs">01.05.2018</text><text transform="translate(603.5,268.3) rotate(-45)" font-size="7.0" fill="#505050" text-anchor="end" font-family='"Liberation Sans", sans-serif' textLength="34.6" lengthAdjust="spacingAndGlyphs">01.06.2018</text><text transform="translate(621.5,268.3) rotate(-45)" font-size="7.0" fill="#505050" text-anchor="end" font-family='"Liberation Sans", sans-serif' textLength="34.6" lengthAdjust="spacingAndGlyphs">01.07.2018</text><text transform="translate(639.5,268.3) rotate(-45)" font-size="7.0" fill="#505050" text-anchor="end" font-family='"Liberation Sans", sans-serif' textLength="34.6" lengthAdjust="spacingAndGlyphs">01.08.2018</text><text transform="translate(657.5,268.3) rotate(-45)" font-size="7.0" fill="#505050" text-anchor="end" font-family='"Liberation Sans", sans-serif' textLength="34.6" lengthAdjust="spacingAndGlyphs">01.09.2018</text><text transform="translate(675.5,268.3) rotate(-45)" font-size="7.0" fill="#505050" text-anchor="end" font-family='"Liberation Sans", sans-serif' textLength="34.6" lengthAdjust="spacingAndGlyphs">01.10.2018</text><text transform="translate(693.5,268.3) rotate(-45)" font-size="7.0" fill="#505050" text-anchor="end" font-family='"Liberation Sans", sans-serif' textLength="34.6" lengthAdjust="spacingAndGlyphs">01.11.2018</text><text transform="translate(711.5,268.3) rotate(-45)" font-size="7.0" fill="#505050" text-anchor="end" font-family='"Liberation Sans", sans-serif' textLength="34.6" lengthAdjust="spacingAndGlyphs">01.12.2018</text><text transform="translate(729.5,268.3) rotate(-45)" font-size="7.0" fill="#505050" text-anchor="end" font-family='"Liberation Sans", sans-serif' textLength="34.6" lengthAdjust="spacingAndGlyphs">01.01.2019</text><text transform="translate(747.5,268.3) rotate(-45)" font-size="7.0" fill="#505050" text-anchor="end" font-family='"Liberation Sans", sans-serif' textLength="34.6" lengthAdjust="spacingAndGlyphs">01.02.2019</text><text transform="translate(765.5,268.3) rotate(-45)" font-size="7.0" fill="#505050" text-anchor="end" font-family='"Liberation Sans", sans-serif' textLength="34.6" lengthAdjust="spacingAndGlyphs">01.03.2019</text><path d="M528.3 306.8h17.6" stroke="#5b9bd5" stroke-width="1.85"/><circle cx="537.3" cy="306.8" r="2.1" fill="#5b9bd5"/><text x="547.3" y="309.2" font-size="7" fill="#595959" font-family='"Liberation Sans", sans-serif' textLength="83.4" lengthAdjust="spacingAndGlyphs">Počet zaměstnanců Celkem</text><path d="M645.6 306.8h16.4" stroke="#ed7d31" stroke-width="1.85"/><circle cx="654" cy="306.8" r="2.1" fill="#ed7d31"/><text x="663.5" y="309.2" font-size="7" fill="#595959" font-family='"Liberation Sans", sans-serif' textLength="70.7" lengthAdjust="spacingAndGlyphs">Zaměstnanci ve výrobě</text><rect x="602.6" y="143.8" width="55.0" height="17.1" fill="#fff" stroke="#a0a0a0" stroke-width="0.8"/><text x="605.75" y="156.1" font-size="10.6" fill="#595959" font-family='"Liberation Sans", sans-serif' textLength="49" lengthAdjust="spacingAndGlyphs">Chart Title</text><circle cx="602.6" cy="143.8" r="1.7" fill="#cfe4f8" stroke="#4a90d9" stroke-width="0.9"/><circle cx="657.6" cy="143.8" r="1.7" fill="#cfe4f8" stroke="#4a90d9" stroke-width="0.9"/><circle cx="602.6" cy="160.9" r="1.7" fill="#cfe4f8" stroke="#4a90d9" stroke-width="0.9"/><circle cx="657.6" cy="160.9" r="1.7" fill="#cfe4f8" stroke="#4a90d9" stroke-width="0.9"/><circle cx="479.6" cy="139.5" r="2.9" fill="#fff" stroke="#7f7f7f" stroke-width="0.9"/><circle cx="630.6" cy="139.5" r="2.9" fill="#fff" stroke="#7f7f7f" stroke-width="0.9"/><circle cx="781.6" cy="139.5" r="2.9" fill="#fff" stroke="#7f7f7f" stroke-width="0.9"/><circle cx="479.6" cy="229.4" r="2.9" fill="#fff" stroke="#7f7f7f" stroke-width="0.9"/><circle cx="781.6" cy="229.4" r="2.9" fill="#fff" stroke="#7f7f7f" stroke-width="0.9"/><circle cx="479.6" cy="319.3" r="2.9" fill="#fff" stroke="#7f7f7f" stroke-width="0.9"/><circle cx="630.6" cy="319.3" r="2.9" fill="#fff" stroke="#7f7f7f" stroke-width="0.9"/><circle cx="781.6" cy="319.3" r="2.9" fill="#fff" stroke="#7f7f7f" stroke-width="0.9"/></svg>
<div style="left:790.40px;top:139.00px;width:17.20px;height:17.20px;background:#fff;border:0.8px solid #c6c6c6;"></div>
<div style="left:790.40px;top:162.80px;width:17.20px;height:17.20px;background:#fff;border:0.8px solid #c6c6c6;"></div>
<div style="left:790.40px;top:186.40px;width:17.20px;height:17.20px;background:#fff;border:0.8px solid #c6c6c6;"></div>
<svg style="left:790.4px;top:139px" width="17.2" height="17.2" viewBox="0 0 17.2 17.2"><path d="M7.3 4.2h2.6v3.1h3.1v2.6h-3.1v3.1h-2.6v-3.100h-3.1v-2.6h3.1z" fill="#68a888"/></svg>
<svg style="left:790.4px;top:162.8px" width="17.2" height="17.2" viewBox="0 0 17.2 17.2"><path d="M13.8 3.2l-4.600 4.400l1 1z" fill="#4a4a4a" stroke="#4a4a4a" stroke-width="0.6"/><path d="M8.8 7.800l1.200 1.200l-1.500 1.500l-1.200-1.200z" fill="#d8d8d8"/><path d="M7.100 9.500l1.300 1.300c-0.800 2.200-3.200 2.700-5.200 2.500c1.600-.6 2.100-2.600 3.900-3.800z" fill="#3d7cc9"/></svg>
<svg style="left:790.4px;top:186.400px" width="17.2" height="17.2" viewBox="0 0 17.2 17.2"><path d="M3.300 3.800h10.600l-4.300 4.500v5.200l-2-1.200v-4z" fill="#8c8c8c" stroke="#6e6e6e" stroke-width="0.4"/></svg>
<div style="left:0.40px;top:61.40px;width:83.00px;height:167.00px;background:#fff;border:0.8px solid #c6c6c6;box-shadow:1px 1px 2.5px rgba(0,0,0,.28);"></div>
<div style="left:2.00px;top:93.00px;width:80.60px;height:14.30px;background:#c6c6c6;"></div>
<div class="t" style="top:65px;font-size:7.6px;line-height:9px;color:#333;left:20.80px;transform-origin:0 50%;transform:scaleX(0.8641);">A<u>x</u>es</div>
<svg style="left:74.3px;top:67.40px" width="3" height="5" viewBox="0 0 3 5"><path d="M0.2 0.3l2.4 2.1l-2.4 2.1z" fill="#555"/></svg>
<svg style="left:3.1px;top:64.70px" width="11" height="10.6" viewBox="0 0 13 12.5"><path d="M3.900 9.300v-4.900h2.100v4.900zM6.200 9.300v-7.100h2.400v7.100zM9 9.300v-4.700h2.200v4.700z" fill="#fff" stroke="#5a5a5a" stroke-width="0.95"/><path d="M2 1.200v8.900h10.800" fill="none" stroke="#ee7d31" stroke-width="1.100"/></svg>
<div class="t" style="top:80px;font-size:7.6px;line-height:9px;color:#333;left:20.80px;transform-origin:0 50%;transform:scaleX(0.9384);"><u>A</u>xis Titles</div>
<svg style="left:74.3px;top:82.41px" width="3" height="5" viewBox="0 0 3 5"><path d="M0.2 0.3l2.4 2.1l-2.4 2.1z" fill="#555"/></svg>
<svg style="left:3.1px;top:79.71px" width="11" height="10.6" viewBox="0 0 13 12.5"><path d="M4.200 8.800v-5.200h2.200v5.200zM6.400 8.800v-6.800h2.400v6.800zM8.800 8.800v-5h2.300v5z" fill="#fff" stroke="#5a5a5a" stroke-width="0.95"/><path d="M2.200 1.800v6.700" stroke="#ee7d31" stroke-width="1.600"/><path d="M4.800 10.700h6" stroke="#ee7d31" stroke-width="1.500"/></svg>
<div class="t" style="top:95px;font-size:7.6px;line-height:9px;color:#333;left:20.80px;transform-origin:0 50%;transform:scaleX(0.9845);"><u>C</u>hart Title</div>
<svg style="left:74.3px;top:97.42px" width="3" height="5" viewBox="0 0 3 5"><path d="M0.2 0.3l2.4 2.1l-2.4 2.1z" fill="#555"/></svg>
<svg style="left:3.1px;top:94.72px" width="11" height="10.6" viewBox="0 0 13 12.5"><path d="M3.800 9.600v-3.200h2v-3h2.900v3h1.700v3.200zM5.800 6.400v3.200M8.700 6.400v3.200" fill="#e9e9e9" stroke="#6a6a6a" stroke-width="0.85"/><path d="M3.400 1.400h7.400" stroke="#ee7d31" stroke-width="1.500"/></svg>
<div class="t" style="top:110px;font-size:7.6px;line-height:9px;color:#333;left:20.80px;transform-origin:0 50%;transform:scaleX(0.9147);"><u>D</u>ata Labels</div>
<svg style="left:74.3px;top:112.43px" width="3" height="5" viewBox="0 0 3 5"><path d="M0.2 0.3l2.4 2.1l-2.4 2.1z" fill="#555"/></svg>
<svg style="left:3.1px;top:109.73px" width="11" height="10.6" viewBox="0 0 13 12.5"><path d="M3.800 10.400v-3.800h2.100v3.800zM5.900 10.400v-6h2.300v6zM8.200 10.400v-4.200h2.300v4.200z" fill="#dcdcdc" stroke="#6e6e6e" stroke-width="0.8"/><path d="M4.800 4.700v.1M7 2.100v.1M9.600 4.300v.1" stroke="#ee7d31" stroke-width="1.500" stroke-linecap="square"/></svg>
<div class="t" style="top:125px;font-size:7.6px;line-height:9px;color:#333;left:20.80px;transform-origin:0 50%;transform:scaleX(0.9586);">Data Ta<u>b</u>le</div>
<svg style="left:74.3px;top:127.44px" width="3" height="5" viewBox="0 0 3 5"><path d="M0.2 0.3l2.4 2.1l-2.4 2.1z" fill="#555"/></svg>
<svg style="left:3.1px;top:124.74px" width="11" height="10.6" viewBox="0 0 13 12.5"><path d="M3.200 6.800v-4.600h2v4.600M5.800 6.800v-5.600h2.100v2.200h2.200v3.400" fill="none" stroke="#6a6a6a" stroke-width="0.9"/><rect x="2.600" y="7.600" width="9.600" height="3.700" fill="#ee7d31"/><path d="M5.700 7.600v3.700M9 7.600v3.700M2.600 9.400h9.600" stroke="#f7c9a6" stroke-width="0.5"/></svg>
<div class="t" style="top:140px;font-size:7.6px;line-height:9px;color:#333;left:20.80px;transform-origin:0 50%;transform:scaleX(0.8981);"><u>E</u>rror Bars</div>
<svg style="left:74.3px;top:142.45px" width="3" height="5" viewBox="0 0 3 5"><path d="M0.2 0.3l2.4 2.1l-2.4 2.1z" fill="#555"/></svg>
<svg style="left:3.1px;top:139.75px" width="11" height="10.6" viewBox="0 0 13 12.5"><path d="M3.600 10.400v-3.400h2.100v3.400zM5.700 10.400v-4.800h2.400v4.800zM8.100 10.400v-3.600h2.300v3.600z" fill="#dcdcdc" stroke="#7a7a7a" stroke-width="0.8"/><path d="M7 2.400v3.600M6 2.400h2" stroke="#ee7d31" stroke-width="0.9"/></svg>
<div class="t" style="top:155px;font-size:7.6px;line-height:9px;color:#333;left:20.80px;transform-origin:0 50%;transform:scaleX(0.9437);"><u>G</u>ridlines</div>
<svg style="left:74.3px;top:157.46px" width="3" height="5" viewBox="0 0 3 5"><path d="M0.2 0.3l2.4 2.1l-2.4 2.1z" fill="#555"/></svg>
<svg style="left:3.1px;top:154.76px" width="11" height="10.6" viewBox="0 0 13 12.5"><path d="M4 10.400v-6h2.200v6zM6.800 10.400v-7.600h2.200v7.600z" fill="#dcdcdc" stroke="#7a7a7a" stroke-width="0.8"/><path d="M2.600 4h3M2.600 6.400h3M2.600 8.800h3M9.600 4h2M9.600 6.400h2M9.600 8.800h2" stroke="#ee7d31" stroke-width="0.8"/></svg>
<div class="t" style="top:170px;font-size:7.6px;line-height:9px;color:#333;left:20.80px;transform-origin:0 50%;transform:scaleX(0.9542);"><u>L</u>egend</div>
<svg style="left:74.3px;top:172.47px" width="3" height="5" viewBox="0 0 3 5"><path d="M0.2 0.3l2.4 2.1l-2.4 2.1z" fill="#555"/></svg>
<svg style="left:3.1px;top:169.77px" width="11" height="10.6" viewBox="0 0 13 12.5"><path d="M1.6 11v-3h2v3M3.8 11v-5h2.2v5M6.2 11v-3.6h2v3.6z" fill="#888" stroke="#666" stroke-width="0.6"/><rect x="7.4" y="1" width="4.4" height="4.8" fill="#fff" stroke="#ee7d31" stroke-width="1"/></svg>
<div class="t" style="top:185px;font-size:7.6px;line-height:9px;color:#333;left:20.80px;transform-origin:0 50%;transform:scaleX(0.9136);">L<u>i</u>nes</div>
<svg style="left:74.3px;top:187.48px" width="3" height="5" viewBox="0 0 3 5"><path d="M0.2 0.3l2.4 2.1l-2.4 2.1z" fill="#555"/></svg>
<svg style="left:3.1px;top:184.78px" width="11" height="10.6" viewBox="0 0 13 12.5"><path d="M2 1.5v9.5h10" fill="none" stroke="#999" stroke-width="0.8"/><path d="M2.6 8l2.4-3.4l2.6 2.4l3.2-4" fill="none" stroke="#777" stroke-width="0.8"/><path d="M5 4.6v6M7.6 7v4M10 4v7" stroke="#ee7d31" stroke-width="0.7"/></svg>
<div class="t" style="top:200px;font-size:7.6px;line-height:9px;color:#333;left:20.80px;transform-origin:0 50%;transform:scaleX(0.9967);"><u>T</u>rendline</div>
<svg style="left:74.3px;top:202.49px" width="3" height="5" viewBox="0 0 3 5"><path d="M0.2 0.3l2.4 2.1l-2.4 2.1z" fill="#555"/></svg>
<svg style="left:3.1px;top:199.79px" width="11" height="10.6" viewBox="0 0 13 12.5"><path d="M2 1.5v9.5h10" fill="none" stroke="#999" stroke-width="0.8"/><path d="M3 9.5l8-7" fill="none" stroke="#777" stroke-width="0.7"/><path d="M4 8v.1M6 7.4v.1M7.6 4.4v.1M9.6 4.8v.1" stroke="#ee7d31" stroke-width="1.3" stroke-linecap="square"/></svg>
<div class="t" style="top:215px;font-size:7.6px;line-height:9px;color:#333;left:20.80px;transform-origin:0 50%;transform:scaleX(0.9613);"><u>U</u>p/Down Bars</div>
<svg style="left:74.3px;top:217.50px" width="3" height="5" viewBox="0 0 3 5"><path d="M0.2 0.3l2.4 2.1l-2.4 2.1z" fill="#555"/></svg>
<svg style="left:3.1px;top:214.80px" width="11" height="10.6" viewBox="0 0 13 12.5"><path d="M2 1.5v9.5h10" fill="none" stroke="#999" stroke-width="0.8"/><path d="M3 6.4l2-1.6l3 2.6l3-2.4M3 5l2 2.2l3-2l3 2" fill="none" stroke="#888" stroke-width="0.6"/><rect x="4.2" y="4.2" width="1.8" height="3.4" fill="#ee7d31"/><rect x="9" y="4.4" width="1.6" height="3" fill="#fff" stroke="#666" stroke-width="0.5"/></svg>
<div style="left:83.20px;top:92.60px;width:103.40px;height:100.40px;background:#fff;border:0.8px solid #c6c6c6;box-shadow:1px 1px 2.5px rgba(0,0,0,.28);"></div>
<div style="left:84.10px;top:121.40px;width:101.00px;height:27.00px;background:#c6c6c6;"></div>
<div style="left:85.30px;top:95.20px;width:24.80px;height:24.70px;background:#eef7f2;border:0.8px solid #93c9ab;"></div>
<svg style="left:88.5px;top:98px" width="20" height="20" viewBox="0 0 20 20"><path d="M3.200 6.4v10h11" fill="none" stroke="#8a8a8a" stroke-width="0.6"/><path d="M4.600 16v-6h2.300v6zM6.900 16v-8.6h2.300v8.600zM9.200 16v-6.800h2.300v6.800zM11.500 16v-4h2.100v4z" fill="none" stroke="#8a8a8a" stroke-width="0.75"/><rect x="2.800" y="1.300" width="11.600" height="3.300" rx="1.200" fill="#fbe3d0" stroke="#f0a05f" stroke-width="0.9"/><path d="M11.800 2.700l5 6M16.800 2.700l-5 6" stroke="#d9552b" stroke-width="1.050"/></svg>
<svg style="left:88.5px;top:125.8px" width="20" height="20" viewBox="0 0 20 20"><path d="M1 6v11.400h15.500" fill="none" stroke="#8a8a8a" stroke-width="0.7"/><path d="M3 17v-7h2.800v7zM5.800 17v-10.200h2.800v10.200zM8.600 17v-8h2.800v8zM11.400 17v-4.800h2.600v4.800z" fill="#fff" stroke="#8a8a8a" stroke-width="0.8"/><rect x="2.800" y="1.300" width="12" height="3.300" rx="1.200" fill="#fbe3d0" stroke="#f0a05f" stroke-width="0.9"/></svg>
<svg style="left:88.5px;top:153px" width="20" height="20" viewBox="0 0 20 20"><path d="M1 6v11.400h15.500" fill="none" stroke="#8a8a8a" stroke-width="0.7"/><path d="M3 17v-7h2.800v7zM5.800 17v-10.200h2.800v10.200zM8.600 17v-8h2.800v8zM11.400 17v-4.800h2.600v4.800z" fill="none" stroke="#8a8a8a" stroke-width="0.8"/><rect x="2.800" y="1.300" width="12" height="3.300" rx="1.200" fill="#fbe3d0" stroke="#f0a05f" stroke-width="0.9"/></svg>
<div class="t" style="top:103px;font-size:7.8px;line-height:9px;color:#333;left:116.70px;transform-origin:0 50%;transform:scaleX(0.9653);"><u>N</u>one</div>
<div class="t" style="top:131px;font-size:7.8px;line-height:9px;color:#333;left:116.70px;transform-origin:0 50%;transform:scaleX(0.9433);"><u>A</u>bove Chart</div>
<div class="t" style="top:158px;font-size:7.8px;line-height:9px;color:#333;left:116.70px;transform-origin:0 50%;transform:scaleX(0.9177);"><u>C</u>entered Overlay</div>
<div style="left:84.00px;top:176.40px;width:101.40px;height:0.80px;background:#e2e2e2;"></div>
<div class="t" style="top:180px;font-size:7.8px;line-height:9px;color:#333;left:103.30px;transform-origin:0 50%;transform:scaleX(0.9686);"><u>M</u>ore Title Options...</div>
<svg style="left:157.6px;top:139px" width="10" height="15" viewBox="0 0 10 15"><path d="M0.8 0.8v10.4l2.4-2.2l1.8 4.1l1.6-.7l-1.8-4h3.3z" fill="#fff" stroke="#222" stroke-width="0.8" stroke-linejoin="round"/></svg>
</body></html>
